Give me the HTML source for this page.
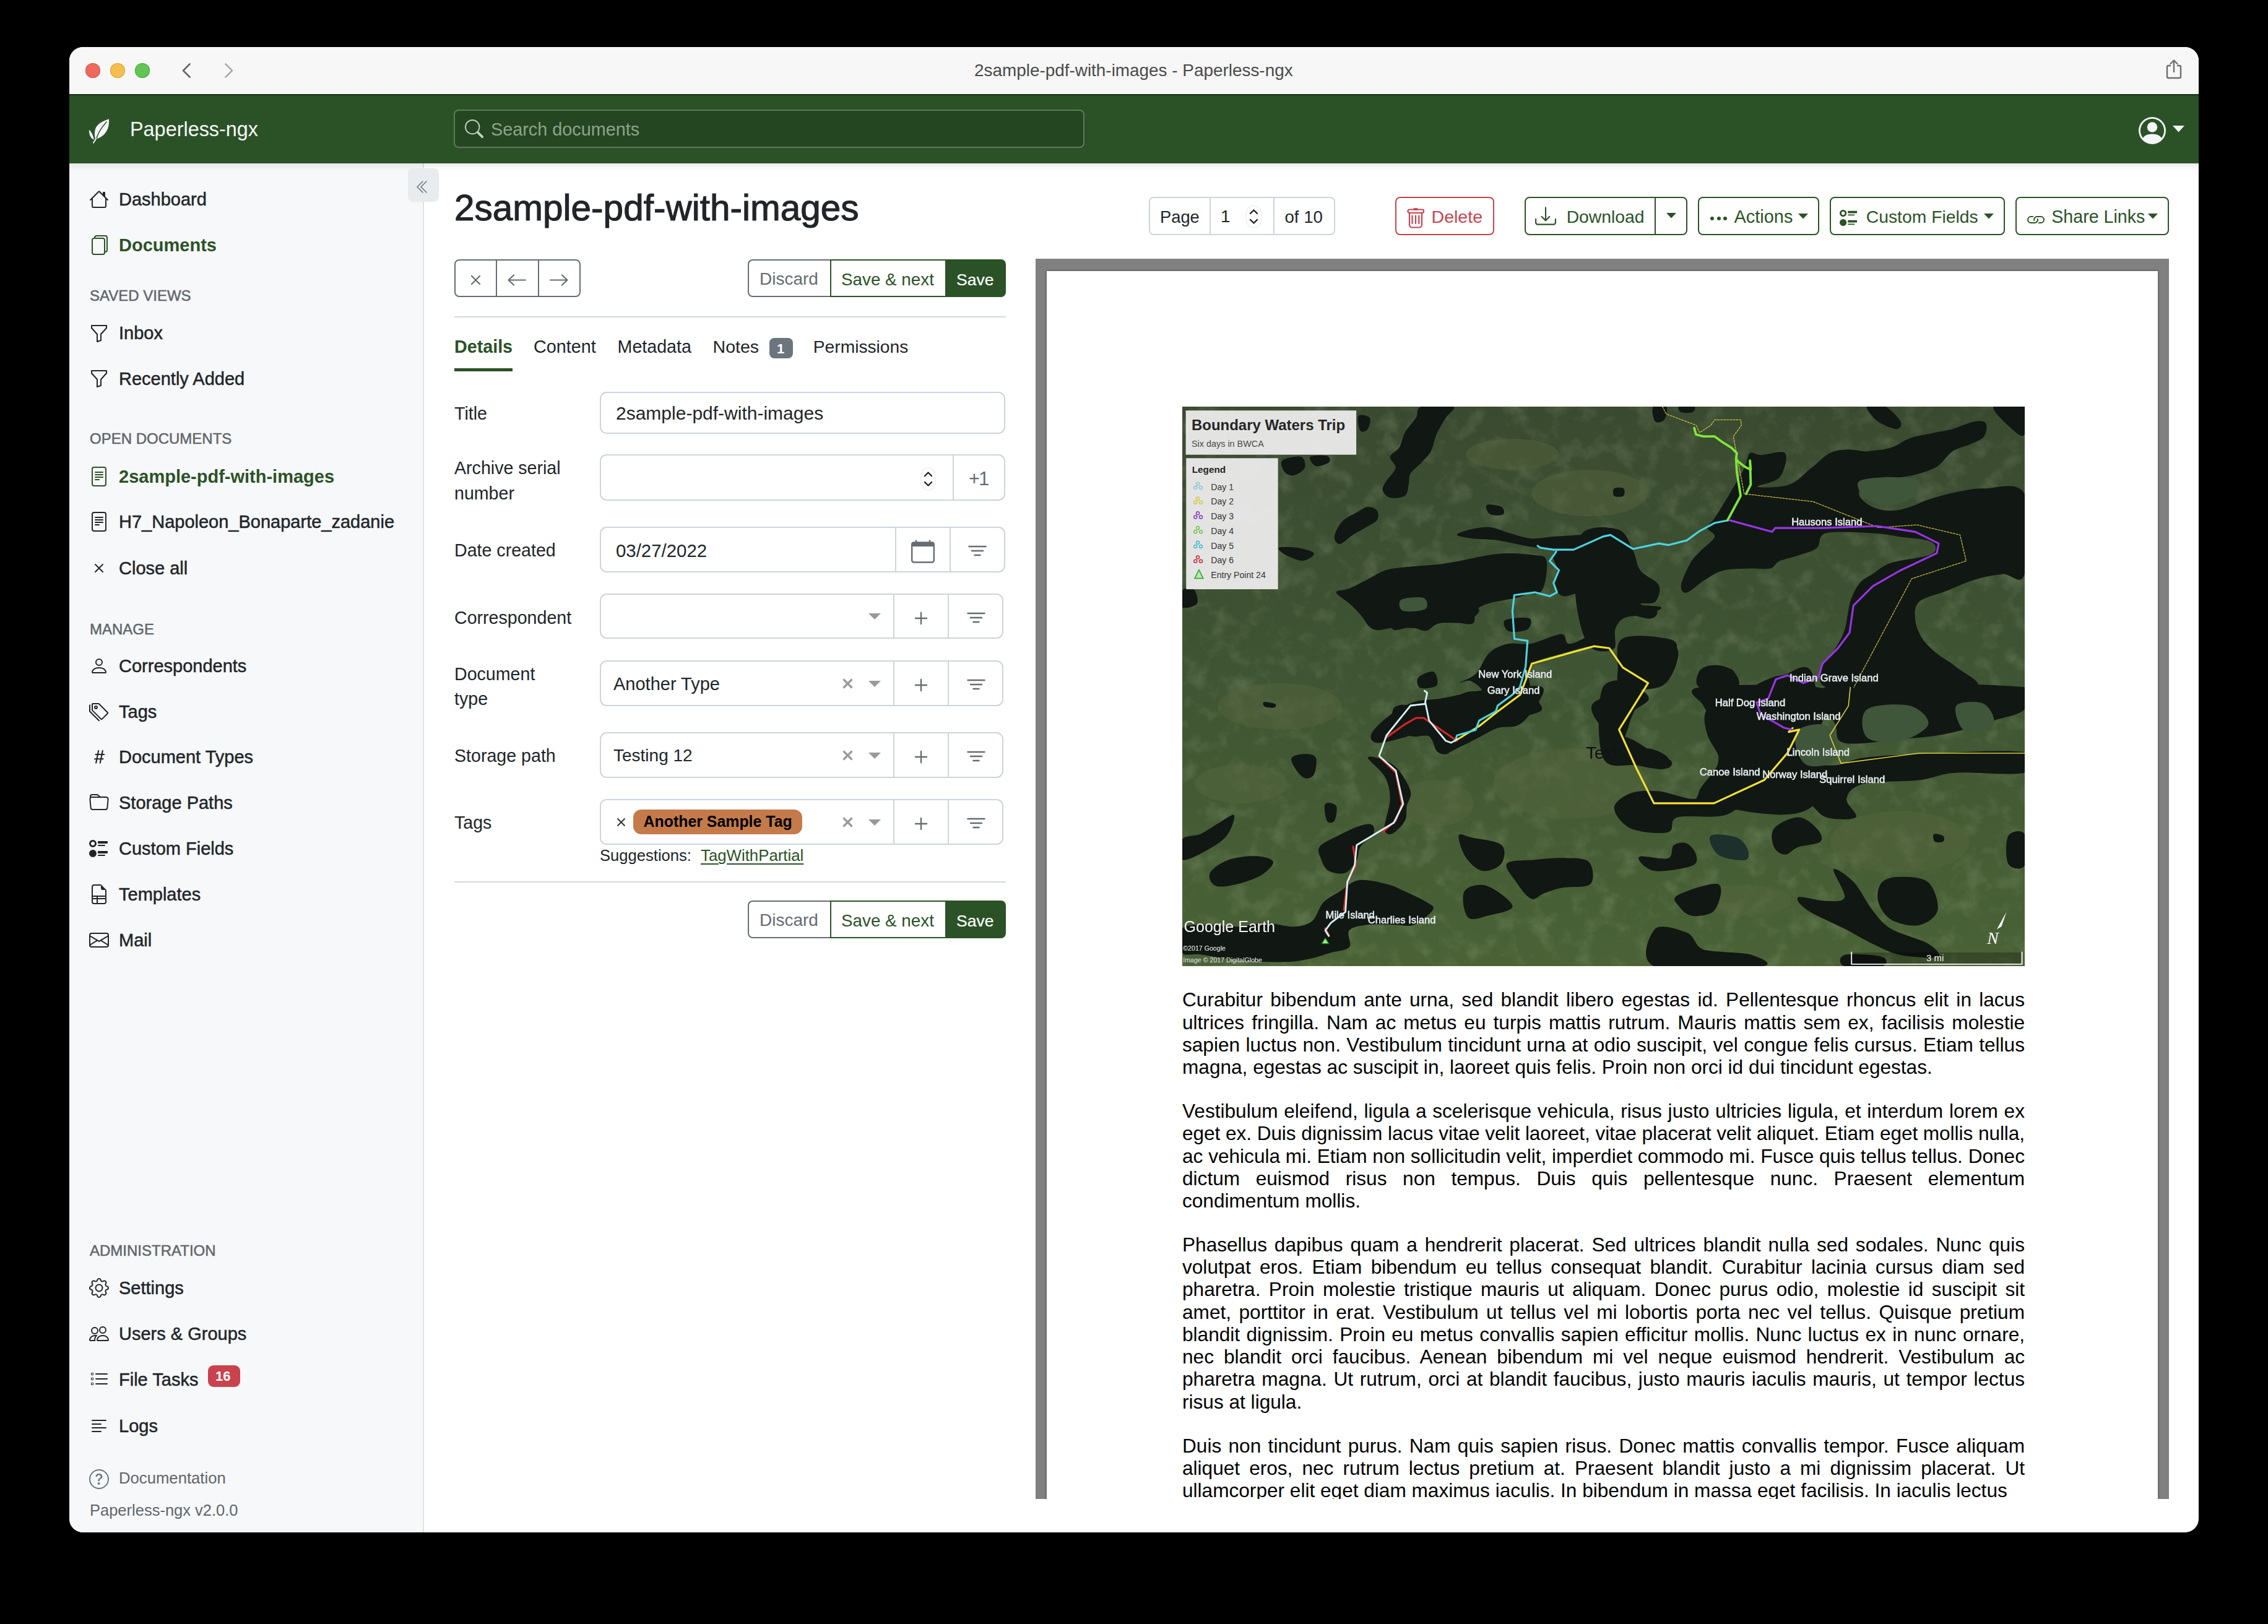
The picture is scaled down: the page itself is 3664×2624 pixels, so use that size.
<!DOCTYPE html>
<html><head><meta charset="utf-8"><title>Paperless-ngx</title>
<style>
html,body{margin:0;padding:0;width:3664px;height:2624px;overflow:hidden;background:#000}
#win{position:absolute;left:0;top:0;width:3664px;height:2624px;clip-path:inset(76px 112px 148px 112px round 22px)}
.t{position:absolute;white-space:nowrap;font-family:"Liberation Sans",sans-serif}
.r{position:absolute;box-sizing:border-box}
svg.r{overflow:visible}
</style></head><body><div id="win">
<div class="r" style="left:112px;top:76px;width:3440px;height:2400px;background:#fff"></div>
<div class="r" style="left:112px;top:76px;width:3440px;height:76px;background:#f7f7f7"></div>
<div class="r" style="left:138px;top:102px;width:24px;height:24px;border-radius:50%;background:#ee6a5f;box-shadow:inset 0 0 0 1px #d8574c"></div>
<div class="r" style="left:178px;top:102px;width:24px;height:24px;border-radius:50%;background:#f5bf4f;box-shadow:inset 0 0 0 1px #d9a23a"></div>
<div class="r" style="left:218px;top:102px;width:24px;height:24px;border-radius:50%;background:#61c554;box-shadow:inset 0 0 0 1px #4fa83f"></div>
<svg class="r" style="left:292px;top:101px;" width="18" height="26" viewBox="0 0 18 26"><path d="M14.5 2.5 L4 13 L14.5 23.5" fill="none" stroke="#636363" stroke-width="2.6" stroke-linecap="round" stroke-linejoin="round"/></svg>
<svg class="r" style="left:361px;top:101px;" width="18" height="26" viewBox="0 0 18 26"><path d="M3.5 2.5 L14 13 L3.5 23.5" fill="none" stroke="#ababab" stroke-width="2.6" stroke-linecap="round" stroke-linejoin="round"/></svg>
<div class="t " style="left:1574.0px;top:100.4px;font-size:27.9px;line-height:27.9px;color:#4a4a4a;font-weight:400;">2sample-pdf-with-images - Paperless-ngx</div>
<svg class="r" style="left:3498px;top:95px;" width="28" height="34" viewBox="0 0 28 34"><path d="M9 11 H5 a2 2 0 0 0 -2 2 V29 a2 2 0 0 0 2 2 H23 a2 2 0 0 0 2 -2 V13 a2 2 0 0 0 -2 -2 H19" fill="none" stroke="#6e6e6e" stroke-width="2.4"/><path d="M14 21 V3 M8.5 8 L14 2.5 L19.5 8" fill="none" stroke="#6e6e6e" stroke-width="2.4" stroke-linecap="round" stroke-linejoin="round"/></svg>
<div class="r" style="left:112px;top:152px;width:3440px;height:112px;background:#2b5227"></div>
<div class="r" style="left:112px;top:152px;width:3440px;height:2px;background:#143013"></div>
<svg class="r" style="left:143px;top:191px;" width="35" height="41" viewBox="0 0 35 41"><path d="M33,1.2 C33.8,12 31,22.5 21.4,29.3 C17,32.3 13.5,33.5 11.2,33.6 C9.2,28 9.6,20 12,15 C15.5,8.5 24,4.2 33,1.2 Z" fill="#f4f5f7"/><path d="M0.9,18.7 C4.5,22 7.5,27 8.9,34.8 C4.5,33 0.6,28 0.9,18.7 Z" fill="#f4f5f7"/><path d="M29.5,5.5 C22,13.5 15.5,23 12.2,34.5" fill="none" stroke="#2b5227" stroke-width="1.5"/><path d="M12.2,33 L8,39.8" fill="none" stroke="#f4f5f7" stroke-width="1.9" stroke-linecap="round"/></svg>
<div class="t " style="left:210.0px;top:192.9px;font-size:32.4px;line-height:32.4px;color:#f8f9fa;font-weight:400;">Paperless-ngx</div>
<div class="r" style="left:733px;top:177px;width:1019px;height:62px;box-sizing:border-box;border:2px solid rgba(255,255,255,0.28);border-radius:8px;background:rgba(0,0,0,0.14)"></div>
<svg class="r" style="left:751px;top:193px;" width="30" height="30" viewBox="0 0 16 16"><path d="M11.742 10.344a6.5 6.5 0 1 0-1.397 1.398h-.001c.03.04.062.078.098.115l3.85 3.85a1 1 0 0 0 1.415-1.414l-3.85-3.85a1.007 1.007 0 0 0-.115-.1zM12 6.5a5.5 5.5 0 1 1-11 0 5.5 5.5 0 0 1 11 0z" fill="#c4cfc2"/></svg>
<div class="t " style="left:793.0px;top:194.6px;font-size:28.8px;line-height:28.8px;color:#8ea489;font-weight:400;">Search documents</div>
<svg class="r" style="left:3455px;top:189px;" width="44" height="44" viewBox="0 0 16 16"><path d="M11 6a3 3 0 1 1-6 0 3 3 0 0 1 6 0z" fill="#f4f5f7"/><path fill-rule="evenodd" d="M0 8a8 8 0 1 1 16 0A8 8 0 0 1 0 8zm8-7a7 7 0 0 0-5.468 11.37C3.242 11.226 4.805 10 8 10s4.757 1.225 5.468 2.37A7 7 0 0 0 8 1z" fill="#f4f5f7"/></svg>
<svg class="r" style="left:3510px;top:203px;" width="19" height="11" viewBox="0 0 19 11"><path d="M0 0 H19 L9.5 10.5 Z" fill="#f4f5f7"/></svg>
<div class="r" style="left:112px;top:264px;width:572px;height:2212px;background:#f7f8fa"></div>
<div class="r" style="left:683px;top:264px;width:2px;height:2212px;background:#dfe2e6"></div>
<div class="r" style="left:112px;top:264px;width:3440px;height:12px;background:linear-gradient(rgba(0,0,0,0.07),rgba(0,0,0,0))"></div>
<div class="r" style="left:659px;top:272px;width:50px;height:54px;background:#e9ecef;border-radius:8px"></div>
<svg class="r" style="left:671px;top:290px;fill:#6c757d" width="24" height="24" viewBox="0 0 16 16"><path fill-rule="evenodd" d="M8.354 1.646a.5.5 0 0 1 0 .708L2.707 8l5.647 5.646a.5.5 0 0 1-.708.708l-6-6a.5.5 0 0 1 0-.708l6-6a.5.5 0 0 1 .708 0z"/><path fill-rule="evenodd" d="M12.354 1.646a.5.5 0 0 1 0 .708L6.707 8l5.647 5.646a.5.5 0 0 1-.708.708l-6-6a.5.5 0 0 1 0-.708l6-6a.5.5 0 0 1 .708 0z"/></svg>
<svg class="r" style="left:144px;top:306px;fill:#212529" width="32" height="32" viewBox="0 0 16 16"><path d="M8.707 1.5a1 1 0 0 0-1.414 0L.646 8.146a.5.5 0 0 0 .708.708L2 8.207V13.5A1.5 1.5 0 0 0 3.5 15h9a1.5 1.5 0 0 0 1.5-1.5V8.207l.646.647a.5.5 0 0 0 .708-.708L13 5.793V2.5a.5.5 0 0 0-.5-.5h-1a.5.5 0 0 0-.5.5v1.293L8.707 1.5ZM13 7.207V13.5a.5.5 0 0 1-.5.5h-9a.5.5 0 0 1-.5-.5V7.207l5-5 5 5Z"/></svg>
<div class="t " style="left:192.0px;top:307.5px;font-size:29px;line-height:29px;color:#212529;font-weight:400;-webkit-text-stroke:0.5px currentColor;">Dashboard</div>
<svg class="r" style="left:144px;top:380px;fill:#2b5227" width="32" height="32" viewBox="0 0 16 16"><path d="M13 0H6a2 2 0 0 0-2 2 2 2 0 0 0-2 2v10a2 2 0 0 0 2 2h7a2 2 0 0 0 2-2 2 2 0 0 0 2-2V2a2 2 0 0 0-2-2zm0 13V4a2 2 0 0 0-2-2H5a1 1 0 0 1 1-1h7a1 1 0 0 1 1 1v10a1 1 0 0 1-1 1zM3 4a1 1 0 0 1 1-1h7a1 1 0 0 1 1 1v10a1 1 0 0 1-1 1H4a1 1 0 0 1-1-1V4z"/></svg>
<div class="t " style="left:192.0px;top:381.5px;font-size:29px;line-height:29px;color:#2b5227;font-weight:700;">Documents</div>
<div class="t " style="left:145.0px;top:465.7px;font-size:24px;line-height:24px;color:#5f656b;font-weight:400;-webkit-text-stroke:0.5px currentColor;">SAVED VIEWS</div>
<svg class="r" style="left:144px;top:522.5px;fill:#212529" width="32" height="32" viewBox="0 0 16 16"><path d="M1.5 1.5A.5.5 0 0 1 2 1h12a.5.5 0 0 1 .5.5v2a.5.5 0 0 1-.128.334L10 8.692V13.5a.5.5 0 0 1-.342.474l-3 1A.5.5 0 0 1 6 14.5V8.692L1.628 3.834A.5.5 0 0 1 1.5 3.5v-2zm1 .5v1.308l4.372 4.858A.5.5 0 0 1 7 8.5v5.306l2-.666V8.5a.5.5 0 0 1 .128-.334L13.5 3.308V2h-11z"/></svg>
<div class="t " style="left:192.0px;top:524.0px;font-size:29px;line-height:29px;color:#212529;font-weight:400;-webkit-text-stroke:0.5px currentColor;">Inbox</div>
<svg class="r" style="left:144px;top:596px;fill:#212529" width="32" height="32" viewBox="0 0 16 16"><path d="M1.5 1.5A.5.5 0 0 1 2 1h12a.5.5 0 0 1 .5.5v2a.5.5 0 0 1-.128.334L10 8.692V13.5a.5.5 0 0 1-.342.474l-3 1A.5.5 0 0 1 6 14.5V8.692L1.628 3.834A.5.5 0 0 1 1.5 3.5v-2zm1 .5v1.308l4.372 4.858A.5.5 0 0 1 7 8.5v5.306l2-.666V8.5a.5.5 0 0 1 .128-.334L13.5 3.308V2h-11z"/></svg>
<div class="t " style="left:192.0px;top:597.5px;font-size:29px;line-height:29px;color:#212529;font-weight:400;-webkit-text-stroke:0.5px currentColor;">Recently Added</div>
<div class="t " style="left:145.0px;top:696.7px;font-size:24px;line-height:24px;color:#5f656b;font-weight:400;-webkit-text-stroke:0.5px currentColor;">OPEN DOCUMENTS</div>
<svg class="r" style="left:144px;top:754px;fill:#2b5227" width="32" height="32" viewBox="0 0 16 16"><path d="M5 4a.5.5 0 0 0 0 1h6a.5.5 0 0 0 0-1H5zm-.5 2.5A.5.5 0 0 1 5 6h6a.5.5 0 0 1 0 1H5a.5.5 0 0 1-.5-.5zM5 8a.5.5 0 0 0 0 1h6a.5.5 0 0 0 0-1H5zm0 2a.5.5 0 0 0 0 1h3a.5.5 0 0 0 0-1H5z"/><path d="M2 2a2 2 0 0 1 2-2h8a2 2 0 0 1 2 2v12a2 2 0 0 1-2 2H4a2 2 0 0 1-2-2V2zm10-1H4a1 1 0 0 0-1 1v12a1 1 0 0 0 1 1h8a1 1 0 0 0 1-1V2a1 1 0 0 0-1-1z"/></svg>
<div class="t " style="left:192.0px;top:755.5px;font-size:29px;line-height:29px;color:#2b5227;font-weight:700;">2sample-pdf-with-images</div>
<svg class="r" style="left:144px;top:827px;fill:#212529" width="32" height="32" viewBox="0 0 16 16"><path d="M5 4a.5.5 0 0 0 0 1h6a.5.5 0 0 0 0-1H5zm-.5 2.5A.5.5 0 0 1 5 6h6a.5.5 0 0 1 0 1H5a.5.5 0 0 1-.5-.5zM5 8a.5.5 0 0 0 0 1h6a.5.5 0 0 0 0-1H5zm0 2a.5.5 0 0 0 0 1h3a.5.5 0 0 0 0-1H5z"/><path d="M2 2a2 2 0 0 1 2-2h8a2 2 0 0 1 2 2v12a2 2 0 0 1-2 2H4a2 2 0 0 1-2-2V2zm10-1H4a1 1 0 0 0-1 1v12a1 1 0 0 0 1 1h8a1 1 0 0 0 1-1V2a1 1 0 0 0-1-1z"/></svg>
<div class="t " style="left:192.0px;top:828.5px;font-size:29px;line-height:29px;color:#212529;font-weight:400;-webkit-text-stroke:0.5px currentColor;">H7_Napoleon_Bonaparte_zadanie</div>
<svg class="r" style="left:144px;top:902px;fill:#212529" width="32" height="32" viewBox="0 0 16 16"><path d="M4.646 4.646a.5.5 0 0 1 .708 0L8 7.293l2.646-2.647a.5.5 0 0 1 .708.708L8.707 8l2.647 2.646a.5.5 0 0 1-.708.708L8 8.707l-2.646 2.647a.5.5 0 0 1-.708-.708L7.293 8 4.646 5.354a.5.5 0 0 1 0-.708z"/></svg>
<div class="t " style="left:192.0px;top:903.5px;font-size:29px;line-height:29px;color:#212529;font-weight:400;-webkit-text-stroke:0.5px currentColor;">Close all</div>
<div class="t " style="left:145.0px;top:1004.7px;font-size:24px;line-height:24px;color:#5f656b;font-weight:400;-webkit-text-stroke:0.5px currentColor;">MANAGE</div>
<svg class="r" style="left:144px;top:1060px;fill:#212529" width="32" height="32" viewBox="0 0 16 16"><path d="M8 8a3 3 0 1 0 0-6 3 3 0 0 0 0 6Zm2-3a2 2 0 1 1-4 0 2 2 0 0 1 4 0Zm4 8c0 1-1 1-1 1H3s-1 0-1-1 1-4 6-4 6 3 6 4Zm-1-.004c-.001-.246-.154-.986-.832-1.664C11.516 10.68 10.289 10 8 10c-2.29 0-3.516.68-4.168 1.332-.678.678-.83 1.418-.832 1.664h10Z"/></svg>
<div class="t " style="left:192.0px;top:1061.5px;font-size:29px;line-height:29px;color:#212529;font-weight:400;-webkit-text-stroke:0.5px currentColor;">Correspondents</div>
<svg class="r" style="left:144px;top:1134px;fill:#212529" width="32" height="32" viewBox="0 0 16 16"><path d="M3 2v4.586l7 7L14.586 9l-7-7H3zM2 2a1 1 0 0 1 1-1h4.586a1 1 0 0 1 .707.293l7 7a1 1 0 0 1 0 1.414l-4.586 4.586a1 1 0 0 1-1.414 0l-7-7A1 1 0 0 1 2 6.586V2z"/><path d="M5.5 5a.5.5 0 1 1 0-1 .5.5 0 0 1 0 1zm0 1a1.5 1.5 0 1 0 0-3 1.5 1.5 0 0 0 0 3zM1 7.086a1 1 0 0 0 .293.707L8.75 15.25l-.043.043a1 1 0 0 1-1.414 0l-7-7A1 1 0 0 1 0 7.586V3a1 1 0 0 1 1-1v5.086z"/></svg>
<div class="t " style="left:192.0px;top:1135.5px;font-size:29px;line-height:29px;color:#212529;font-weight:400;-webkit-text-stroke:0.5px currentColor;">Tags</div>
<svg class="r" style="left:144px;top:1207px;fill:#212529" width="32" height="32" viewBox="0 0 16 16"><path d="M8.39 12.648a1.32 1.32 0 0 0-.015.18c0 .305.21.508.5.508.266 0 .492-.172.555-.477l.554-2.703h1.204c.421 0 .617-.234.617-.547 0-.312-.188-.53-.617-.53h-.985l.516-2.524h1.265c.43 0 .618-.227.618-.547 0-.313-.188-.524-.618-.524h-1.046l.476-2.304a1.06 1.06 0 0 0 .016-.164.51.51 0 0 0-.516-.516.54.54 0 0 0-.539.43l-.523 2.554H7.617l.477-2.304c.008-.04.015-.118.015-.164a.512.512 0 0 0-.523-.516.539.539 0 0 0-.531.43L6.53 5.484H5.414c-.43 0-.617.22-.617.532 0 .312.187.539.617.539h.906l-.515 2.523H4.609c-.421 0-.609.219-.609.531 0 .313.188.547.61.547h.976l-.516 2.492c-.008.04-.015.125-.015.18 0 .305.21.508.5.508.265 0 .492-.172.554-.477l.555-2.703h2.242l-.515 2.492zm-1-6.109h2.266l-.515 2.563H6.859l.532-2.563z"/></svg>
<div class="t " style="left:192.0px;top:1208.5px;font-size:29px;line-height:29px;color:#212529;font-weight:400;-webkit-text-stroke:0.5px currentColor;">Document Types</div>
<svg class="r" style="left:144px;top:1281px;fill:#212529" width="32" height="32" viewBox="0 0 16 16"><path d="M.54 3.87.5 3a2 2 0 0 1 2-2h3.672a2 2 0 0 1 1.414.586l.828.828A2 2 0 0 0 9.828 3h3.982a2 2 0 0 1 1.992 2.181l-.637 7A2 2 0 0 1 13.174 14H2.826a2 2 0 0 1-1.991-1.819l-.637-7a1.99 1.99 0 0 1 .342-1.31zM2.19 4a1 1 0 0 0-.996 1.09l.637 7a1 1 0 0 0 .995.91h10.348a1 1 0 0 0 .995-.91l.637-7A1 1 0 0 0 13.81 4H2.19zm4.69-1.707A1 1 0 0 0 6.172 2H2.5a1 1 0 0 0-1 .981l.006.139C1.72 3.042 1.95 3 2.19 3h5.396l-.707-.707z"/></svg>
<div class="t " style="left:192.0px;top:1282.5px;font-size:29px;line-height:29px;color:#212529;font-weight:400;-webkit-text-stroke:0.5px currentColor;">Storage Paths</div>
<svg class="r" style="left:144px;top:1355px;fill:#212529" width="32" height="32" viewBox="0 0 16 16"><path d="M7 2.5a.5.5 0 0 1 .5-.5h7a.5.5 0 0 1 .5.5v1a.5.5 0 0 1-.5.5h-7a.5.5 0 0 1-.5-.5v-1zM0 12a3 3 0 1 1 6 0 3 3 0 0 1-6 0zm7-1.5a.5.5 0 0 1 .5-.5h7a.5.5 0 0 1 .5.5v1a.5.5 0 0 1-.5.5h-7a.5.5 0 0 1-.5-.5v-1zm0-5a.5.5 0 0 1 .5-.5h5a.5.5 0 0 1 0 1h-5a.5.5 0 0 1-.5-.5zm0 8a.5.5 0 0 1 .5-.5h5a.5.5 0 0 1 0 1h-5a.5.5 0 0 1-.5-.5zM3 1a3 3 0 1 0 0 6 3 3 0 0 0 0-6zm0 4.5a1.5 1.5 0 1 1 0-3 1.5 1.5 0 0 1 0 3z"/></svg>
<div class="t " style="left:192.0px;top:1356.5px;font-size:29px;line-height:29px;color:#212529;font-weight:400;-webkit-text-stroke:0.5px currentColor;">Custom Fields</div>
<svg class="r" style="left:144px;top:1429px;fill:#212529" width="32" height="32" viewBox="0 0 16 16"><path d="M14 4.5V14a2 2 0 0 1-2 2H4a2 2 0 0 1-2-2V2a2 2 0 0 1 2-2h5.5L14 4.5ZM13 4.5h-2A1.5 1.5 0 0 1 9.5 3V1H4a1 1 0 0 0-1 1v7h10V4.5ZM3 10v1h3v-1H3Zm0 2v2a1 1 0 0 0 1 1h2v-3H3Zm4 3h5a1 1 0 0 0 1-1v-2H7v3Zm6-4v-1H7v1h6Z"/></svg>
<div class="t " style="left:192.0px;top:1430.5px;font-size:29px;line-height:29px;color:#212529;font-weight:400;-webkit-text-stroke:0.5px currentColor;">Templates</div>
<svg class="r" style="left:144px;top:1503px;fill:#212529" width="32" height="32" viewBox="0 0 16 16"><path d="M0 4a2 2 0 0 1 2-2h12a2 2 0 0 1 2 2v8a2 2 0 0 1-2 2H2a2 2 0 0 1-2-2V4Zm2-1a1 1 0 0 0-1 1v.217l7 4.2 7-4.2V4a1 1 0 0 0-1-1H2Zm13 2.383-4.708 2.825L15 11.105V5.383Zm-.034 6.876-5.64-3.471L8 9.583l-1.326-.795-5.64 3.47A1 1 0 0 0 2 13h12a1 1 0 0 0 .966-.741ZM1 11.105l4.708-2.897L1 5.383v5.722Z"/></svg>
<div class="t " style="left:192.0px;top:1504.5px;font-size:29px;line-height:29px;color:#212529;font-weight:400;-webkit-text-stroke:0.5px currentColor;">Mail</div>
<div class="t " style="left:145.0px;top:2008.7px;font-size:24px;line-height:24px;color:#5f656b;font-weight:400;-webkit-text-stroke:0.5px currentColor;">ADMINISTRATION</div>
<svg class="r" style="left:144px;top:2065px;fill:#212529" width="32" height="32" viewBox="0 0 16 16"><path d="M8 4.754a3.246 3.246 0 1 0 0 6.492 3.246 3.246 0 0 0 0-6.492zM5.754 8a2.246 2.246 0 1 1 4.492 0 2.246 2.246 0 0 1-4.492 0z"/><path d="M9.796 1.343c-.527-1.79-3.065-1.79-3.592 0l-.094.319a.873.873 0 0 1-1.255.52l-.292-.16c-1.64-.892-3.433.902-2.54 2.541l.159.292a.873.873 0 0 1-.52 1.255l-.319.094c-1.79.527-1.79 3.065 0 3.592l.319.094a.873.873 0 0 1 .52 1.255l-.16.292c-.892 1.64.901 3.434 2.541 2.54l.292-.159a.873.873 0 0 1 1.255.52l.094.319c.527 1.79 3.065 1.79 3.592 0l.094-.319a.873.873 0 0 1 1.255-.52l.292.16c1.64.893 3.434-.902 2.54-2.541l-.159-.292a.873.873 0 0 1 .52-1.255l.319-.094c1.79-.527 1.79-3.065 0-3.592l-.319-.094a.873.873 0 0 1-.52-1.255l.16-.292c.893-1.64-.902-3.433-2.541-2.54l-.292.159a.873.873 0 0 1-1.255-.52l-.094-.319zm-2.633.283c.246-.835 1.428-.835 1.674 0l.094.319a1.873 1.873 0 0 0 2.693 1.115l.291-.16c.764-.415 1.6.42 1.184 1.185l-.159.292a1.873 1.873 0 0 0 1.116 2.692l.318.094c.835.246.835 1.428 0 1.674l-.319.094a1.873 1.873 0 0 0-1.115 2.693l.16.291c.415.764-.42 1.6-1.185 1.184l-.291-.159a1.873 1.873 0 0 0-2.693 1.116l-.094.318c-.246.835-1.428.835-1.674 0l-.094-.319a1.873 1.873 0 0 0-2.692-1.115l-.292.16c-.764.415-1.6-.42-1.184-1.185l.159-.291A1.873 1.873 0 0 0 1.945 8.93l-.319-.094c-.835-.246-.835-1.428 0-1.674l.319-.094A1.873 1.873 0 0 0 3.06 4.377l-.16-.292c-.415-.764.42-1.6 1.185-1.184l.292.159a1.873 1.873 0 0 0 2.692-1.115l.094-.319z"/></svg>
<div class="t " style="left:192.0px;top:2066.5px;font-size:29px;line-height:29px;color:#212529;font-weight:400;-webkit-text-stroke:0.5px currentColor;">Settings</div>
<svg class="r" style="left:144px;top:2139px;fill:#212529" width="32" height="32" viewBox="0 0 16 16"><path d="M15 14s1 0 1-1-1-4-5-4-5 3-5 4 1 1 1 1h8Zm-7.978-1A.261.261 0 0 1 7 12.996c.001-.264.167-1.03.76-1.72C8.312 10.629 9.282 10 11 10c1.717 0 2.687.63 3.24 1.276.593.69.758 1.457.76 1.72l-.008.002a.274.274 0 0 1-.014.002H7.022ZM11 7a2 2 0 1 0 0-4 2 2 0 0 0 0 4Zm3-2a3 3 0 1 1-6 0 3 3 0 0 1 6 0ZM6.936 9.28a5.88 5.88 0 0 0-1.23-.247A7.35 7.35 0 0 0 5 9c-4 0-5 3-5 4 0 .667.333 1 1 1h4.216A2.238 2.238 0 0 1 5 13c0-1.01.377-2.042 1.09-2.904.243-.294.526-.569.846-.816ZM4.92 10A5.493 5.493 0 0 0 4 13H1c0-.26.164-1.03.76-1.724.545-.636 1.492-1.256 3.16-1.275ZM1.5 5.5a3 3 0 1 1 6 0 3 3 0 0 1-6 0Zm3-2a2 2 0 1 0 0 4 2 2 0 0 0 0-4Z"/></svg>
<div class="t " style="left:192.0px;top:2140.5px;font-size:29px;line-height:29px;color:#212529;font-weight:400;-webkit-text-stroke:0.5px currentColor;">Users &amp; Groups</div>
<svg class="r" style="left:144px;top:2213px;fill:#212529" width="32" height="32" viewBox="0 0 16 16"><path fill-rule="evenodd" d="M2 2.5a.5.5 0 0 0-.5.5v1a.5.5 0 0 0 .5.5h1a.5.5 0 0 0 .5-.5V3a.5.5 0 0 0-.5-.5H2zM3 3H2v1h1V3z"/><path d="M5 3.5a.5.5 0 0 1 .5-.5h9a.5.5 0 0 1 0 1h-9a.5.5 0 0 1-.5-.5zM5.5 7a.5.5 0 0 0 0 1h9a.5.5 0 0 0 0-1h-9zm0 4a.5.5 0 0 0 0 1h9a.5.5 0 0 0 0-1h-9z"/><path fill-rule="evenodd" d="M1.5 7a.5.5 0 0 1 .5-.5h1a.5.5 0 0 1 .5.5v1a.5.5 0 0 1-.5.5H2a.5.5 0 0 1-.5-.5V7zM2 7h1v1H2V7zm0 3.5a.5.5 0 0 0-.5.5v1a.5.5 0 0 0 .5.5h1a.5.5 0 0 0 .5-.5v-1a.5.5 0 0 0-.5-.5H2zm1 .5H2v1h1v-1z"/></svg>
<div class="t " style="left:192.0px;top:2214.5px;font-size:29px;line-height:29px;color:#212529;font-weight:400;-webkit-text-stroke:0.5px currentColor;">File Tasks</div>
<div class="r" style="left:336px;top:2206px;width:52px;height:35px;background:#c8434e;border-radius:9px"></div>
<div class="t " style="left:348.0px;top:2213.4px;font-size:22px;line-height:22px;color:#fff;font-weight:700;">16</div>
<svg class="r" style="left:144px;top:2288px;fill:#212529" width="32" height="32" viewBox="0 0 16 16"><path d="M2 12.5a.5.5 0 0 1 .5-.5h7a.5.5 0 0 1 0 1h-7a.5.5 0 0 1-.5-.5zm0-3a.5.5 0 0 1 .5-.5h11a.5.5 0 0 1 0 1h-11a.5.5 0 0 1-.5-.5zm0-3a.5.5 0 0 1 .5-.5h7a.5.5 0 0 1 0 1h-7a.5.5 0 0 1-.5-.5zm0-3a.5.5 0 0 1 .5-.5h11a.5.5 0 0 1 0 1h-11a.5.5 0 0 1-.5-.5z"/></svg>
<div class="t " style="left:192.0px;top:2289.5px;font-size:29px;line-height:29px;color:#212529;font-weight:400;-webkit-text-stroke:0.5px currentColor;">Logs</div>
<svg class="r" style="left:144px;top:2374px;fill:#6c757d" width="32" height="32" viewBox="0 0 16 16"><path d="M8 15A7 7 0 1 1 8 1a7 7 0 0 1 0 14zm0 1A8 8 0 1 0 8 0a8 8 0 0 0 0 16z"/><path d="M5.255 5.786a.237.237 0 0 0 .241.247h.825c.138 0 .248-.113.266-.25.09-.656.54-1.134 1.342-1.134.686 0 1.314.343 1.314 1.168 0 .635-.374.927-.965 1.371-.673.489-1.206 1.06-1.168 1.987l.003.217a.25.25 0 0 0 .25.246h.811a.25.25 0 0 0 .25-.25v-.105c0-.718.273-.927 1.01-1.486.609-.463 1.244-.977 1.244-2.056 0-1.511-1.276-2.241-2.673-2.241-1.267 0-2.655.59-2.75 2.286zm1.557 5.763c0 .533.425.927 1.01.927.609 0 1.028-.394 1.028-.927 0-.552-.42-.94-1.029-.94-.584 0-1.009.388-1.009.94z"/></svg>
<div class="t " style="left:192.0px;top:2376.2px;font-size:25.7px;line-height:25.7px;color:#5f656b;font-weight:400;">Documentation</div>
<div class="t " style="left:145.0px;top:2428.4px;font-size:25.5px;line-height:25.5px;color:#5f656b;font-weight:400;">Paperless-ngx v2.0.0</div>
<div class="t " style="left:734.0px;top:307.0px;font-size:58.5px;line-height:58.5px;color:#212529;font-weight:400;-webkit-text-stroke:1.1px currentColor;">2sample-pdf-with-images</div>
<div class="r" style="left:734px;top:419px;width:204px;height:61px;border:2px solid #656c73;border-radius:8px"></div>
<div class="r" style="left:801px;top:419px;width:2px;height:61px;background:#656c73"></div>
<div class="r" style="left:869px;top:419px;width:2px;height:61px;background:#656c73"></div>
<svg class="r" style="left:761px;top:445px;" width="15" height="15" viewBox="0 0 15 15"><path d="M1 1 L14 14 M14 1 L1 14" stroke="#656c73" stroke-width="2.2" stroke-linecap="round"/></svg>
<svg class="r" style="left:819px;top:443px;" width="32" height="20" viewBox="0 0 32 20"><path d="M30 9.5 H2.5 M11 1.5 L2.5 9.5 L11 17.5" fill="none" stroke="#656c73" stroke-width="2.2" stroke-linecap="round" stroke-linejoin="round"/></svg>
<svg class="r" style="left:887px;top:443px;" width="32" height="20" viewBox="0 0 32 20"><path d="M2 9.5 H29.5 M21 1.5 L29.5 9.5 L21 17.5" fill="none" stroke="#656c73" stroke-width="2.2" stroke-linecap="round" stroke-linejoin="round"/></svg>
<div class="r" style="left:1208px;top:419px;width:135px;height:61px;border:2px solid #656c73;border-right:none;border-radius:8px 0 0 8px"></div>
<div class="r" style="left:1341px;top:419px;width:188px;height:61px;border:2px solid #2b5227"></div>
<div class="r" style="left:1528px;top:419px;width:97px;height:61px;background:#2b5227;border-radius:0 8px 8px 0"></div>
<div class="t " style="left:1227.0px;top:437.3px;font-size:28px;line-height:28px;color:#656c73;font-weight:400;">Discard</div>
<div class="t " style="left:1359.0px;top:437.5px;font-size:27.8px;line-height:27.8px;color:#2b5227;font-weight:400;">Save &amp; next</div>
<div class="t " style="left:1545.0px;top:438.6px;font-size:26.5px;line-height:26.5px;color:#fff;font-weight:400;-webkit-text-stroke:0.2px #fff;">Save</div>
<div class="r" style="left:734px;top:511px;width:891px;height:2px;background:#d3d9df"></div>
<div class="t " style="left:734.0px;top:545.7px;font-size:28.7px;line-height:28.7px;color:#2b5227;font-weight:700;">Details</div>
<div class="t " style="left:862.0px;top:545.6px;font-size:28.8px;line-height:28.8px;color:#212529;font-weight:400;">Content</div>
<div class="t " style="left:997.6px;top:545.8px;font-size:28.6px;line-height:28.6px;color:#212529;font-weight:400;">Metadata</div>
<div class="t " style="left:1151.6px;top:545.9px;font-size:28.5px;line-height:28.5px;color:#212529;font-weight:400;">Notes</div>
<div class="r" style="left:1243px;top:546px;width:38px;height:33px;background:#6c757d;border-radius:8px"></div>
<div class="t " style="left:1255.0px;top:553.4px;font-size:22px;line-height:22px;color:#fff;font-weight:700;">1</div>
<div class="t " style="left:1313.8px;top:546.1px;font-size:28.2px;line-height:28.2px;color:#212529;font-weight:400;">Permissions</div>
<div class="r" style="left:734px;top:595px;width:94px;height:5px;background:#2b5227"></div>
<div class="t " style="left:734.0px;top:653.8px;font-size:28.6px;line-height:28.6px;color:#212529;font-weight:400;">Title</div>
<div class="r" style="left:969px;top:633px;width:655px;height:68px;border:2px solid #ced4da;border-radius:11px"></div>
<div class="t " style="left:995.0px;top:652.6px;font-size:30px;line-height:30px;color:#212529;font-weight:400;">2sample-pdf-with-images</div>
<div class="t " style="left:734.0px;top:741.8px;font-size:28.6px;line-height:28.6px;color:#212529;font-weight:400;">Archive serial</div>
<div class="t " style="left:734.0px;top:783.3px;font-size:28.6px;line-height:28.6px;color:#212529;font-weight:400;">number</div>
<div class="r" style="left:969px;top:734px;width:655px;height:75px;border:2px solid #ced4da;border-radius:11px"></div>
<div class="r" style="left:1539px;top:734px;width:2px;height:75px;background:#ced4da"></div>
<div class="r" style="left:1488px;top:757px;width:23px;height:34px;border-radius:11px;box-shadow:0 0 2px rgba(0,0,0,0.25);background:#fff"></div>
<svg class="r" style="left:1492px;top:761px;" width="15" height="26" viewBox="0 0 15 26"><path d="M2 8 L7.5 2.5 L13 8 M2 18 L7.5 23.5 L13 18" fill="none" stroke="#222" stroke-width="2.4" stroke-linecap="round" stroke-linejoin="round"/></svg>
<div class="t " style="left:1565.0px;top:757.6px;font-size:30.5px;line-height:30.5px;color:#656c73;font-weight:400;letter-spacing:-1.5px;">+1</div>
<div class="t " style="left:734.0px;top:874.8px;font-size:28.6px;line-height:28.6px;color:#212529;font-weight:400;">Date created</div>
<div class="r" style="left:969px;top:851px;width:655px;height:74px;border:2px solid #ced4da;border-radius:11px"></div>
<div class="r" style="left:1446px;top:851px;width:2px;height:74px;background:#ced4da"></div>
<div class="r" style="left:1534px;top:851px;width:2px;height:74px;background:#ced4da"></div>
<div class="t " style="left:995.0px;top:874.5px;font-size:29.4px;line-height:29.4px;color:#212529;font-weight:400;">03/27/2022</div>
<svg class="r" style="left:1472px;top:872px;" width="38" height="38" viewBox="0 0 38 38"><rect x="1.2" y="4.5" width="35.6" height="32" rx="3" fill="none" stroke="#656c73" stroke-width="2.4"/><rect x="1.2" y="4.5" width="35.6" height="6.5" rx="2" fill="#656c73"/><path d="M8 0.5 V5 M30 0.5 V5" stroke="#656c73" stroke-width="2.4"/></svg>
<svg class="r" style="left:1564px;top:881px;" width="30" height="18" viewBox="0 0 30 18"><path d="M1.5 2 H28.5 M6 9 H24 M10.5 16 H19.5" stroke="#656c73" stroke-width="2.4" stroke-linecap="round"/></svg>
<div class="r" style="left:969px;top:959px;width:652px;height:73px;border:2px solid #ced4da;border-radius:11px"></div>
<div class="r" style="left:1443px;top:959px;width:2px;height:73px;background:#ced4da"></div>
<div class="r" style="left:1531px;top:959px;width:2px;height:73px;background:#ced4da"></div>
<svg class="r" style="left:1403px;top:991.0px;" width="20" height="10" viewBox="0 0 20 10"><path d="M0 0 H20 L10 10 Z" fill="#999999"/></svg>
<svg class="r" style="left:1477.5px;top:988.5px;" width="20" height="20" viewBox="0 0 20 20"><path d="M10 1 V19 M1 10 H19" stroke="#656c73" stroke-width="2.4" stroke-linecap="round"/></svg>
<svg class="r" style="left:1562px;top:988.5px;" width="30" height="18" viewBox="0 0 30 18"><path d="M1.5 2 H28.5 M6 9 H24 M10.5 16 H19.5" stroke="#656c73" stroke-width="2.4" stroke-linecap="round"/></svg>
<div class="t " style="left:734.0px;top:983.8px;font-size:28.6px;line-height:28.6px;color:#212529;font-weight:400;">Correspondent</div>
<div class="r" style="left:969px;top:1067px;width:652px;height:74px;border:2px solid #ced4da;border-radius:11px"></div>
<div class="r" style="left:1443px;top:1067px;width:2px;height:74px;background:#ced4da"></div>
<div class="r" style="left:1531px;top:1067px;width:2px;height:74px;background:#ced4da"></div>
<svg class="r" style="left:1403px;top:1099.5px;" width="20" height="10" viewBox="0 0 20 10"><path d="M0 0 H20 L10 10 Z" fill="#999999"/></svg>
<svg class="r" style="left:1361px;top:1095.5px;" width="17" height="17" viewBox="0 0 17 17"><path d="M1.5 1.5 L15.5 15.5 M15.5 1.5 L1.5 15.5" stroke="#999999" stroke-width="3.2" stroke-linecap="butt"/></svg>
<svg class="r" style="left:1477.5px;top:1097.0px;" width="20" height="20" viewBox="0 0 20 20"><path d="M10 1 V19 M1 10 H19" stroke="#656c73" stroke-width="2.4" stroke-linecap="round"/></svg>
<svg class="r" style="left:1562px;top:1097.0px;" width="30" height="18" viewBox="0 0 30 18"><path d="M1.5 2 H28.5 M6 9 H24 M10.5 16 H19.5" stroke="#656c73" stroke-width="2.4" stroke-linecap="round"/></svg>
<div class="t " style="left:734.0px;top:1074.8px;font-size:28.6px;line-height:28.6px;color:#212529;font-weight:400;">Document</div>
<div class="t " style="left:734.0px;top:1114.8px;font-size:28.6px;line-height:28.6px;color:#212529;font-weight:400;">type</div>
<div class="t " style="left:991.0px;top:1090.5px;font-size:29px;line-height:29px;color:#212529;font-weight:400;">Another Type</div>
<div class="r" style="left:969px;top:1183px;width:652px;height:74px;border:2px solid #ced4da;border-radius:11px"></div>
<div class="r" style="left:1443px;top:1183px;width:2px;height:74px;background:#ced4da"></div>
<div class="r" style="left:1531px;top:1183px;width:2px;height:74px;background:#ced4da"></div>
<svg class="r" style="left:1403px;top:1215.5px;" width="20" height="10" viewBox="0 0 20 10"><path d="M0 0 H20 L10 10 Z" fill="#999999"/></svg>
<svg class="r" style="left:1361px;top:1211.5px;" width="17" height="17" viewBox="0 0 17 17"><path d="M1.5 1.5 L15.5 15.5 M15.5 1.5 L1.5 15.5" stroke="#999999" stroke-width="3.2" stroke-linecap="butt"/></svg>
<svg class="r" style="left:1477.5px;top:1213.0px;" width="20" height="20" viewBox="0 0 20 20"><path d="M10 1 V19 M1 10 H19" stroke="#656c73" stroke-width="2.4" stroke-linecap="round"/></svg>
<svg class="r" style="left:1562px;top:1213.0px;" width="30" height="18" viewBox="0 0 30 18"><path d="M1.5 2 H28.5 M6 9 H24 M10.5 16 H19.5" stroke="#656c73" stroke-width="2.4" stroke-linecap="round"/></svg>
<div class="t " style="left:734.0px;top:1206.8px;font-size:28.6px;line-height:28.6px;color:#212529;font-weight:400;">Storage path</div>
<div class="t " style="left:991.0px;top:1207.3px;font-size:28px;line-height:28px;color:#212529;font-weight:400;">Testing 12</div>
<div class="r" style="left:969px;top:1291px;width:652px;height:74px;border:2px solid #ced4da;border-radius:11px"></div>
<div class="r" style="left:1443px;top:1291px;width:2px;height:74px;background:#ced4da"></div>
<div class="r" style="left:1531px;top:1291px;width:2px;height:74px;background:#ced4da"></div>
<svg class="r" style="left:1403px;top:1323.5px;" width="20" height="10" viewBox="0 0 20 10"><path d="M0 0 H20 L10 10 Z" fill="#999999"/></svg>
<svg class="r" style="left:1361px;top:1319.5px;" width="17" height="17" viewBox="0 0 17 17"><path d="M1.5 1.5 L15.5 15.5 M15.5 1.5 L1.5 15.5" stroke="#999999" stroke-width="3.2" stroke-linecap="butt"/></svg>
<svg class="r" style="left:1477.5px;top:1321.0px;" width="20" height="20" viewBox="0 0 20 20"><path d="M10 1 V19 M1 10 H19" stroke="#656c73" stroke-width="2.4" stroke-linecap="round"/></svg>
<svg class="r" style="left:1562px;top:1321.0px;" width="30" height="18" viewBox="0 0 30 18"><path d="M1.5 2 H28.5 M6 9 H24 M10.5 16 H19.5" stroke="#656c73" stroke-width="2.4" stroke-linecap="round"/></svg>
<div class="t " style="left:734.0px;top:1314.8px;font-size:28.6px;line-height:28.6px;color:#212529;font-weight:400;">Tags</div>
<svg class="r" style="left:996px;top:1321px;" width="15" height="15" viewBox="0 0 15 15"><path d="M1.5 1.5 L13.5 13.5 M13.5 1.5 L1.5 13.5" stroke="#333" stroke-width="2"/></svg>
<div class="r" style="left:1023px;top:1308px;width:273px;height:40px;background:#c47a4a;border-radius:13px"></div>
<div class="t " style="left:1039.5px;top:1314.9px;font-size:24.9px;line-height:24.9px;color:#000;font-weight:700;">Another Sample Tag</div>
<div class="t " style="left:969.0px;top:1370.3px;font-size:25.6px;line-height:25.6px;color:#212529;font-weight:400;">Suggestions:</div>
<div class="t " style="left:1132.0px;top:1370.2px;font-size:25.8px;line-height:25.8px;color:#2b5227;font-weight:400;text-decoration:underline;text-underline-offset:4px;text-decoration-thickness:2px;">TagWithPartial</div>
<div class="r" style="left:734px;top:1424px;width:891px;height:2px;background:#d3d9df"></div>
<div class="r" style="left:1208px;top:1455px;width:135px;height:61px;border:2px solid #656c73;border-right:none;border-radius:8px 0 0 8px"></div>
<div class="r" style="left:1341px;top:1455px;width:188px;height:61px;border:2px solid #2b5227"></div>
<div class="r" style="left:1528px;top:1455px;width:97px;height:61px;background:#2b5227;border-radius:0 8px 8px 0"></div>
<div class="t " style="left:1227.0px;top:1473.3px;font-size:28px;line-height:28px;color:#656c73;font-weight:400;">Discard</div>
<div class="t " style="left:1359.0px;top:1473.5px;font-size:27.8px;line-height:27.8px;color:#2b5227;font-weight:400;">Save &amp; next</div>
<div class="t " style="left:1545.0px;top:1474.6px;font-size:26.5px;line-height:26.5px;color:#fff;font-weight:400;-webkit-text-stroke:0.2px #fff;">Save</div>
<div class="r" style="left:1856px;top:318px;width:301px;height:62px;border:2px solid #ced4da;border-radius:8px"></div>
<div class="r" style="left:1954px;top:318px;width:2px;height:62px;background:#ced4da"></div>
<div class="r" style="left:2057px;top:318px;width:2px;height:62px;background:#ced4da"></div>
<div class="t " style="left:1874.0px;top:336.9px;font-size:27.3px;line-height:27.3px;color:#212529;font-weight:400;">Page</div>
<div class="t " style="left:1972.0px;top:336.3px;font-size:28px;line-height:28px;color:#212529;font-weight:400;">1</div>
<div class="r" style="left:2014px;top:333px;width:23px;height:34px;border-radius:11px;box-shadow:0 0 2px rgba(0,0,0,0.25);background:#fff"></div>
<svg class="r" style="left:2018px;top:337px;" width="15" height="26" viewBox="0 0 15 26"><path d="M2 8 L7.5 2.5 L13 8 M2 18 L7.5 23.5 L13 18" fill="none" stroke="#222" stroke-width="2.4" stroke-linecap="round" stroke-linejoin="round"/></svg>
<div class="t " style="left:2075.5px;top:336.6px;font-size:27.6px;line-height:27.6px;color:#212529;font-weight:400;">of 10</div>
<div class="r" style="left:2254px;top:318px;width:160px;height:62px;border:2px solid #c8434e;border-radius:8px"></div>
<svg class="r" style="left:2270px;top:333px;" width="34" height="38" viewBox="0 0 34 38"><rect x="4.5" y="5.5" width="25.5" height="5.5" rx="2.5" fill="none" stroke="#c8434e" stroke-width="2.2"/><rect x="13" y="3.2" width="8" height="3.5" rx="1.7" fill="#c8434e"/><path d="M7 11 V30 a4.5 4.5 0 0 0 4.5 4.5 H22.5 a4.5 4.5 0 0 0 4.5 -4.5 V11" fill="none" stroke="#c8434e" stroke-width="2.2"/><path d="M11.5 15.5 V28 M17 15.5 V28 M22.3 15.5 V28" stroke="#c8434e" stroke-width="2.2" stroke-linecap="round"/></svg>
<div class="t " style="left:2312.6px;top:335.9px;font-size:28.5px;line-height:28.5px;color:#c8434e;font-weight:400;">Delete</div>
<div class="r" style="left:2463px;top:318px;width:263px;height:62px;border:2px solid #2b5227;border-radius:8px"></div>
<div class="r" style="left:2673px;top:318px;width:2px;height:62px;background:#2b5227"></div>
<svg class="r" style="left:2479px;top:332px;fill:#2b5227" width="36" height="34" viewBox="0 0 16 16"><path d="M.5 9.9a.5.5 0 0 1 .5.5v2.5a1 1 0 0 0 1 1h12a1 1 0 0 0 1-1v-2.5a.5.5 0 0 1 1 0v2.5a2 2 0 0 1-2 2H2a2 2 0 0 1-2-2v-2.5a.5.5 0 0 1 .5-.5z"/><path d="M7.646 11.854a.5.5 0 0 0 .708 0l3-3a.5.5 0 0 0-.708-.708L8.5 10.293V1.5a.5.5 0 0 0-1 0v8.793L5.354 8.146a.5.5 0 1 0-.708.708l3 3z"/></svg>
<div class="t " style="left:2530.7px;top:336.0px;font-size:28.3px;line-height:28.3px;color:#2b5227;font-weight:400;">Download</div>
<svg class="r" style="left:2692px;top:344px;" width="16" height="9" viewBox="0 0 16 9"><path d="M0 0 H16 L8 8.5 Z" fill="#2b5227"/></svg>
<div class="r" style="left:2743px;top:318px;width:196px;height:62px;border:2px solid #2b5227;border-radius:8px"></div>
<div class="r" style="left:2763px;top:350px;width:6px;height:6px;border-radius:50%;background:#2b5227"></div>
<div class="r" style="left:2773.5px;top:350px;width:6px;height:6px;border-radius:50%;background:#2b5227"></div>
<div class="r" style="left:2784px;top:350px;width:6px;height:6px;border-radius:50%;background:#2b5227"></div>
<div class="t " style="left:2801.6px;top:335.5px;font-size:28.9px;line-height:28.9px;color:#2b5227;font-weight:400;">Actions</div>
<svg class="r" style="left:2905px;top:345px;" width="16" height="9" viewBox="0 0 16 9"><path d="M0 0 H16 L8 8.5 Z" fill="#2b5227"/></svg>
<div class="r" style="left:2956px;top:318px;width:283px;height:62px;border:2px solid #2b5227;border-radius:8px"></div>
<svg class="r" style="left:2971px;top:337px;fill:#2b5227" width="32" height="30" viewBox="0 0 16 16"><path d="M7 2.5a.5.5 0 0 1 .5-.5h7a.5.5 0 0 1 .5.5v1a.5.5 0 0 1-.5.5h-7a.5.5 0 0 1-.5-.5v-1zM0 12a3 3 0 1 1 6 0 3 3 0 0 1-6 0zm7-1.5a.5.5 0 0 1 .5-.5h7a.5.5 0 0 1 .5.5v1a.5.5 0 0 1-.5.5h-7a.5.5 0 0 1-.5-.5v-1zm0-5a.5.5 0 0 1 .5-.5h5a.5.5 0 0 1 0 1h-5a.5.5 0 0 1-.5-.5zm0 8a.5.5 0 0 1 .5-.5h5a.5.5 0 0 1 0 1h-5a.5.5 0 0 1-.5-.5zM3 1a3 3 0 1 0 0 6 3 3 0 0 0 0-6zm0 4.5a1.5 1.5 0 1 1 0-3 1.5 1.5 0 0 1 0 3z"/></svg>
<div class="t " style="left:3014.8px;top:336.0px;font-size:28.3px;line-height:28.3px;color:#2b5227;font-weight:400;">Custom Fields</div>
<svg class="r" style="left:3205px;top:345px;" width="16" height="9" viewBox="0 0 16 9"><path d="M0 0 H16 L8 8.5 Z" fill="#2b5227"/></svg>
<div class="r" style="left:3256px;top:318px;width:248px;height:62px;border:2px solid #2b5227;border-radius:8px"></div>
<svg class="r" style="left:3273px;top:338px;fill:#2b5227" width="32" height="32" viewBox="0 0 16 16"><path d="M6.354 5.5H4a3 3 0 0 0 0 6h3a3 3 0 0 0 2.83-4H9c-.086 0-.17.01-.25.031A2 2 0 0 1 7 10.5H4a2 2 0 1 1 0-4h1.535c.218-.376.495-.714.82-1z"/><path d="M9 5.5a3 3 0 0 0-2.83 4h1.098A2 2 0 0 1 9 6.5h3a2 2 0 1 1 0 4h-1.535a4.02 4.02 0 0 1-.82 1H12a3 3 0 1 0 0-6H9z"/></svg>
<div class="t " style="left:3314.3px;top:335.8px;font-size:28.6px;line-height:28.6px;color:#2b5227;font-weight:400;">Share Links</div>
<svg class="r" style="left:3470px;top:345px;" width="16" height="9" viewBox="0 0 16 9"><path d="M0 0 H16 L8 8.5 Z" fill="#2b5227"/></svg>
<div class="r" style="left:1673px;top:418px;width:1831px;height:2004px;overflow:hidden;background:#808080"><div class="r" style="left:18px;top:20px;width:1795px;height:2100px;background:#fff;box-shadow:0 0 3px 1px rgba(0,0,0,0.28)"></div></div>
<svg class="r" style="left:1910px;top:657px;overflow:hidden" width="1361" height="904" viewBox="48 27 2174 1443" preserveAspectRatio="none"><defs><linearGradient id="mg" x1="0" y1="0" x2="0" y2="1"><stop offset="0" stop-color="#3a4a30"/><stop offset="0.5" stop-color="#3f5533"/><stop offset="1" stop-color="#4a6236"/></linearGradient><filter id="sh" x="-5%" y="-20%" width="110%" height="140%"><feDropShadow dx="0" dy="0" stdDeviation="1.2" flood-color="#000" flood-opacity="0.9"/></filter></defs><rect x="48" y="27" width="2174" height="1443" fill="url(#mg)"/><filter id="tx" x="0" y="0" width="100%" height="100%"><feTurbulence type="fractalNoise" baseFrequency="0.018" numOctaves="4" seed="7"/><feColorMatrix type="matrix" values="0 0 0 0 0.55  0 0 0 0 0.6  0 0 0 0 0.4  1.6 0 0 0 -0.78"/></filter><rect x="48" y="27" width="2174" height="1443" filter="url(#tx)" opacity="0.28"/><ellipse cx="300" cy="800" rx="160" ry="60" fill="#56663f" opacity="0.45"/><ellipse cx="200" cy="1000" rx="120" ry="50" fill="#56663f" opacity="0.45"/><ellipse cx="1050" cy="1000" rx="200" ry="90" fill="#56663f" opacity="0.45"/><ellipse cx="1900" cy="1150" rx="180" ry="80" fill="#56663f" opacity="0.45"/><ellipse cx="1100" cy="250" rx="150" ry="60" fill="#56663f" opacity="0.45"/><ellipse cx="900" cy="150" rx="120" ry="40" fill="#56663f" opacity="0.45"/><ellipse cx="1500" cy="1300" rx="120" ry="40" fill="#56663f" opacity="0.45"/><ellipse cx="700" cy="1050" rx="100" ry="60" fill="#56663f" opacity="0.45"/><path d="M665.6,27.1 C681.6,22.4 736.7,22.4 747.0,27.1 C757.4,31.9 735.1,43.9 727.9,55.9 C720.7,67.9 710.3,84.6 703.9,99.0 C697.6,113.3 696.0,130.1 689.6,142.1 C683.2,154.0 674.4,161.2 665.6,170.8 C656.9,180.4 642.5,190.0 636.9,199.5 C631.3,209.1 634.5,218.7 632.1,228.3 C629.7,237.8 630.5,251.4 622.5,257.0 C614.6,262.6 593.8,264.2 584.2,261.8 C574.7,259.4 566.7,249.8 565.1,242.6 C563.5,235.5 569.1,228.3 574.7,218.7 C580.2,209.1 597.0,195.5 598.6,185.2 C600.2,174.8 582.6,165.2 584.2,156.4 C585.8,147.7 601.8,142.9 608.2,132.5 C614.6,122.1 615.4,107.0 622.5,94.2 C629.7,81.4 644.1,67.1 651.3,55.9 C658.5,44.7 649.7,31.9 665.6,27.1Z" fill="#111713"/><path d="M502.8,51.1 C506.8,45.5 527.6,50.3 531.6,55.9 C535.5,61.5 530.8,79.0 526.8,84.6 C522.8,90.2 511.6,95.0 507.6,89.4 C503.6,83.8 498.8,56.7 502.8,51.1Z" fill="#111713"/><path d="M306.5,166.0 C313.7,159.6 344.8,153.2 354.4,156.4 C364.0,159.6 367.2,177.2 364.0,185.2 C360.8,193.2 344.0,202.7 335.2,204.3 C326.4,205.9 316.1,201.1 311.3,194.8 C306.5,188.4 299.3,172.4 306.5,166.0Z" fill="#111713"/><path d="M378.3,156.4 C383.1,152.1 413.4,151.7 421.4,154.0 C429.4,156.4 431.0,166.4 426.2,170.8 C421.4,175.2 400.7,182.8 392.7,180.4 C384.7,178.0 373.5,160.8 378.3,156.4Z" fill="#111713"/><path d="M440.6,362.4 C441.4,352.8 450.2,334.4 459.7,324.0 C469.3,313.7 486.9,306.5 498.0,300.1 C509.2,293.7 518.0,286.5 526.8,285.7 C535.5,284.9 546.7,289.7 550.7,295.3 C554.7,300.9 555.5,312.1 550.7,319.3 C545.9,326.4 532.4,332.0 522.0,338.4 C511.6,344.8 499.6,350.4 488.5,357.6 C477.3,364.7 462.9,380.7 454.9,381.5 C447.0,382.3 439.8,371.9 440.6,362.4Z" fill="#111713"/><path d="M296.9,391.1 C301.7,387.9 329.6,388.7 344.8,391.1 C360.0,393.5 385.5,399.9 387.9,405.4 C390.3,411.0 371.1,423.8 359.2,424.6 C347.2,425.4 326.4,415.8 316.1,410.2 C305.7,404.7 292.1,394.3 296.9,391.1Z" fill="#111713"/><path d="M756.6,357.6 C756.6,353.6 780.6,346.4 794.9,343.2 C809.3,340.0 826.9,336.8 842.8,338.4 C858.8,340.0 873.1,348.0 890.7,352.8 C908.3,357.6 929.0,365.5 948.2,367.1 C967.3,368.7 984.1,363.9 1005.6,362.4 C1027.2,360.8 1056.1,359.2 1077.5,357.6 C1098.8,356.0 1124.5,347.2 1134.0,352.8 C1143.4,358.4 1141.0,383.9 1134.0,391.1 C1126.9,398.3 1113.2,395.1 1091.8,395.9 C1070.4,396.7 1032.0,397.5 1005.6,395.9 C979.3,394.3 957.7,390.3 933.8,386.3 C909.9,382.3 885.1,375.1 862.0,371.9 C838.8,368.7 812.5,369.5 794.9,367.1 C777.4,364.7 756.6,361.6 756.6,357.6Z" fill="#111713"/><path d="M445.4,506.0 C445.4,499.6 465.3,502.0 478.9,496.4 C492.5,490.8 510.8,480.5 526.8,472.5 C542.7,464.5 554.7,454.1 574.7,448.5 C594.6,443.0 624.1,441.4 646.5,439.0 C668.8,436.6 688.8,436.6 708.7,434.2 C728.7,431.8 744.7,428.6 766.2,424.6 C787.7,420.6 817.3,413.4 838.0,410.2 C858.8,407.0 870.8,405.4 890.7,405.4 C910.7,405.4 941.8,407.8 957.7,410.2 C973.7,412.6 981.7,410.2 986.5,419.8 C991.3,429.4 988.9,453.3 986.5,467.7 C984.1,482.1 980.1,498.8 972.1,506.0 C964.1,513.2 949.0,508.4 938.6,510.8 C928.2,513.2 926.6,516.4 909.9,520.4 C893.1,524.4 855.6,529.2 838.0,534.7 C820.5,540.3 811.7,545.1 804.5,553.9 C797.3,562.7 809.3,583.4 794.9,587.4 C780.6,591.4 739.1,576.2 718.3,577.8 C697.6,579.4 690.4,593.8 670.4,597.0 C650.5,600.2 620.1,596.2 598.6,597.0 C577.1,597.8 556.3,607.4 541.1,601.8 C526.0,596.2 518.0,574.6 507.6,563.5 C497.2,552.3 489.3,544.3 478.9,534.7 C468.5,525.2 445.4,512.4 445.4,506.0Z" fill="#111713"/><path d="M1005.6,405.4 C1012.0,396.7 1032.1,399.9 1053.5,395.9 C1074.9,391.9 1120.6,363.1 1134.0,381.5 C1147.4,399.9 1143.4,485.3 1134.0,506.0 C1124.5,526.8 1094.9,504.4 1077.5,506.0 C1060.1,507.6 1041.5,518.8 1029.6,515.6 C1017.6,512.4 1008.0,498.0 1005.6,486.9 C1003.2,475.7 1015.2,462.1 1015.2,448.5 C1015.2,435.0 999.2,414.2 1005.6,405.4Z" fill="#111713"/><path d="M881.1,577.8 C889.9,572.3 933.8,569.1 943.4,573.1 C953.0,577.0 947.4,596.2 938.6,601.8 C929.8,607.4 900.3,610.6 890.7,606.6 C881.1,602.6 872.3,583.4 881.1,577.8Z" fill="#111713"/><path d="M833.2,280.9 C838.0,277.8 864.4,281.7 871.6,285.7 C878.7,289.7 881.1,301.7 876.3,304.9 C871.6,308.1 850.0,308.9 842.8,304.9 C835.6,300.9 828.5,284.1 833.2,280.9Z" fill="#111713"/><path d="M47.9,501.2 C52.7,493.2 70.3,490.8 76.6,496.4 C83.0,502.0 91.0,526.8 86.2,534.7 C81.4,542.7 54.3,549.9 47.9,544.3 C41.5,538.7 43.1,509.2 47.9,501.2Z" fill="#111713"/><path d="M1263.4,27.1 C1268.2,20.8 1292.1,21.6 1296.9,27.1 C1301.7,32.7 1296.9,54.3 1292.1,60.7 C1287.3,67.1 1272.9,71.1 1268.2,65.5 C1263.4,59.9 1258.6,33.5 1263.4,27.1Z" fill="#111713"/><path d="M1330.5,27.1 C1336.1,24.8 1363.3,24.8 1368.9,27.1 C1374.5,29.5 1369.7,39.1 1364.1,41.5 C1358.5,43.9 1340.9,43.9 1335.3,41.5 C1329.7,39.1 1324.9,29.5 1330.5,27.1Z" fill="#111713"/><path d="M1162.6,238.2 C1166.6,235.0 1182.6,235.0 1186.6,238.2 C1190.6,241.4 1190.6,254.2 1186.6,257.3 C1182.6,260.5 1166.6,260.5 1162.6,257.3 C1158.6,254.2 1158.6,241.4 1162.6,238.2Z" fill="#111713"/><path d="M1460.0,252.6 C1472.8,231.0 1489.6,203.0 1498.4,185.4 C1507.1,167.8 1505.5,152.6 1512.7,147.0 C1519.9,141.4 1526.3,151.8 1541.5,151.8 C1556.7,151.8 1595.9,137.5 1603.9,147.0 C1611.9,156.6 1601.5,195.0 1589.5,209.4 C1577.5,223.8 1527.9,230.2 1531.9,233.4 C1535.9,236.6 1590.3,236.6 1613.4,228.6 C1636.6,220.6 1653.4,199.0 1671.0,185.4 C1688.6,171.8 1703.0,155.0 1719.0,147.0 C1734.9,139.1 1750.9,138.3 1766.9,137.5 C1782.9,136.7 1796.5,143.0 1814.9,142.2 C1833.3,141.4 1858.8,138.3 1877.2,132.7 C1895.6,127.1 1906.8,115.1 1925.2,108.7 C1943.6,102.3 1969.1,98.3 1987.5,94.3 C2005.9,90.3 2017.9,89.5 2035.5,84.7 C2053.1,79.9 2078.6,67.9 2093.0,65.5 C2107.4,63.1 2117.8,63.9 2121.8,70.3 C2125.8,76.7 2123.4,95.1 2117.0,103.9 C2110.6,112.7 2097.0,116.7 2083.4,123.1 C2069.8,129.5 2049.9,132.7 2035.5,142.2 C2021.1,151.8 2011.5,171.0 1997.1,180.6 C1982.7,190.2 1965.1,195.0 1949.2,199.8 C1933.2,204.6 1917.2,207.8 1901.2,209.4 C1885.2,211.0 1869.2,206.2 1853.2,209.4 C1837.3,212.6 1814.9,220.6 1805.3,228.6 C1795.7,236.6 1791.7,247.8 1795.7,257.3 C1799.7,266.9 1815.7,279.7 1829.3,286.1 C1842.8,292.5 1861.2,295.7 1877.2,295.7 C1893.2,295.7 1909.2,290.9 1925.2,286.1 C1941.2,281.3 1953.2,273.3 1973.1,266.9 C1993.1,260.5 2021.1,252.6 2045.1,247.8 C2069.1,243.0 2087.6,237.4 2117.0,238.2 C2146.4,239.0 2204.1,215.8 2221.6,252.6 C2239.0,289.3 2231.0,424.4 2221.6,458.8 C2212.1,493.1 2186.4,456.4 2165.0,458.8 C2143.5,461.2 2117.0,466.0 2093.0,473.2 C2069.1,480.4 2045.1,492.3 2021.1,501.9 C1997.1,511.5 1962.7,517.9 1949.2,530.7 C1935.6,543.5 1938.0,562.7 1939.6,578.7 C1941.2,594.7 1949.2,612.2 1958.7,626.6 C1968.3,641.0 1982.7,653.0 1997.1,665.0 C2011.5,677.0 2029.1,684.3 2045.1,698.6 C2061.1,712.9 2125.0,742.1 2093.0,750.8 C2061.1,759.5 1917.2,750.8 1853.2,750.8 C1789.3,750.8 1734.9,759.5 1709.4,750.8 C1683.8,742.1 1695.8,715.3 1699.8,698.6 C1703.8,681.9 1723.8,666.6 1733.3,650.6 C1742.9,634.6 1750.9,622.6 1757.3,602.6 C1763.7,582.7 1765.3,550.7 1771.7,530.7 C1778.1,510.7 1786.1,494.7 1795.7,482.7 C1805.3,470.8 1815.7,467.6 1829.3,458.8 C1842.8,450.0 1853.2,438.0 1877.2,430.0 C1901.2,422.0 1954.0,417.2 1973.1,410.8 C1992.3,404.4 1992.3,398.0 1992.3,391.6 C1992.3,385.2 1988.3,377.2 1973.1,372.4 C1957.9,367.7 1925.2,366.1 1901.2,362.9 C1877.2,359.7 1861.2,354.9 1829.3,353.3 C1797.3,351.7 1733.3,346.9 1709.4,353.3 C1685.4,359.7 1697.4,382.0 1685.4,391.6 C1673.4,401.2 1653.4,405.2 1637.4,410.8 C1621.4,416.4 1601.5,419.6 1589.5,425.2 C1577.5,430.8 1577.5,441.2 1565.5,444.4 C1553.5,447.6 1537.5,443.6 1517.5,444.4 C1497.6,445.2 1465.6,444.4 1445.6,449.2 C1425.6,454.0 1413.6,463.6 1397.6,473.2 C1381.7,482.7 1360.1,504.3 1349.7,506.7 C1339.3,509.1 1333.7,500.3 1335.3,487.5 C1336.9,474.8 1351.3,444.4 1359.3,430.0 C1367.3,415.6 1372.9,412.4 1383.3,401.2 C1393.6,390.0 1418.4,373.2 1421.6,362.9 C1424.8,352.5 1402.4,346.9 1402.4,338.9 C1402.4,330.9 1412.0,329.3 1421.6,314.9 C1431.2,300.5 1447.2,274.1 1460.0,252.6Z" fill="#111713"/><path d="M1076.3,358.1 C1094.7,330.9 1149.9,337.3 1172.2,343.7 C1194.6,350.1 1201.0,378.8 1210.6,396.4 C1220.2,414.0 1218.6,434.0 1229.8,449.2 C1241.0,464.4 1271.3,474.0 1277.7,487.5 C1284.1,501.1 1276.1,522.7 1268.2,530.7 C1260.2,538.7 1229.0,531.5 1229.8,535.5 C1230.6,539.5 1269.0,548.3 1272.9,554.7 C1276.9,561.1 1269.0,573.1 1253.8,573.9 C1238.6,574.7 1197.8,557.9 1181.8,559.5 C1165.8,561.1 1161.0,568.3 1157.8,583.5 C1154.7,598.6 1173.0,641.0 1162.6,650.6 C1152.3,660.2 1112.3,665.0 1095.5,641.0 C1078.7,617.0 1065.1,553.9 1061.9,506.7 C1058.7,459.6 1057.9,385.2 1076.3,358.1Z" fill="#111713"/><path d="M1181.8,626.6 C1199.4,613.8 1253.8,617.8 1277.7,621.8 C1301.7,625.8 1319.3,636.2 1325.7,650.6 C1332.1,665.0 1324.1,691.4 1316.1,708.2 C1308.1,724.9 1300.1,743.7 1277.7,750.8 C1255.4,757.9 1199.4,759.5 1181.8,750.8 C1164.2,742.1 1172.2,719.3 1172.2,698.6 C1172.2,677.9 1164.2,639.4 1181.8,626.6Z" fill="#111713"/><path d="M1383.3,708.2 C1389.6,698.6 1407.2,693.8 1421.6,693.8 C1436.0,693.8 1460.0,698.6 1469.6,708.2 C1479.2,717.7 1493.6,743.7 1479.2,750.8 C1464.8,757.9 1399.2,757.9 1383.3,750.8 C1367.3,743.7 1376.9,717.7 1383.3,708.2Z" fill="#111713"/><path d="M1814.9,27.1 C1818.1,20.8 1848.4,20.8 1862.8,27.1 C1877.2,33.5 1896.4,55.9 1901.2,65.5 C1906.0,75.1 1901.2,84.7 1891.6,84.7 C1882.0,84.7 1856.4,75.1 1843.6,65.5 C1830.9,55.9 1811.7,33.5 1814.9,27.1Z" fill="#111713"/><path d="M2141.0,27.1 C2146.4,17.6 2208.1,15.2 2221.6,27.1 C2235.0,39.1 2227.0,89.5 2221.6,99.1 C2216.1,108.7 2202.4,96.7 2188.9,84.7 C2175.5,72.7 2135.6,36.7 2141.0,27.1Z" fill="#111713"/><path d="M763.3,739.3 C765.7,736.1 793.6,728.1 806.4,715.4 C819.1,702.6 826.3,675.5 839.9,662.7 C853.5,649.9 870.2,642.7 887.8,638.8 C905.3,634.8 926.1,641.9 945.2,638.8 C964.4,635.6 988.3,623.6 1002.7,619.6 C1017.1,615.6 1024.3,611.6 1031.4,614.8 C1038.6,618.0 1035.4,638.0 1045.8,638.8 C1056.2,639.6 1075.3,629.2 1093.7,619.6 C1112.0,610.0 1144.0,594.1 1155.9,581.3 C1167.9,568.5 1144.8,549.4 1165.5,543.0 C1186.3,536.6 1266.1,539.8 1280.4,543.0 C1294.8,546.2 1266.9,557.3 1251.7,562.1 C1236.6,566.9 1203.8,565.3 1189.5,571.7 C1175.1,578.1 1170.3,588.5 1165.5,600.4 C1160.7,612.4 1170.3,636.4 1160.7,643.5 C1151.2,650.7 1129.6,640.3 1108.1,643.5 C1086.5,646.7 1057.8,654.7 1031.4,662.7 C1005.1,670.7 964.4,677.9 950.0,691.4 C935.7,705.0 942.9,728.9 945.2,744.1 C947.6,759.3 959.6,771.2 964.4,782.4 C969.2,793.6 982.0,803.2 974.0,811.1 C966.0,819.1 929.3,823.9 916.5,830.3 C903.7,836.7 903.7,846.3 897.4,849.5 C891.0,852.6 884.6,853.4 878.2,849.5 C871.8,845.5 870.2,827.1 859.1,825.5 C847.9,823.9 822.3,831.1 811.2,839.9 C800.0,848.7 801.6,870.2 792.0,878.2 C782.4,886.2 763.3,880.6 753.7,887.8 C744.1,894.9 742.5,916.5 734.5,921.3 C726.6,926.1 713.8,923.7 705.8,916.5 C697.8,909.3 696.2,884.6 686.7,878.2 C677.1,871.8 659.5,879.0 648.4,878.2 C637.2,877.4 629.2,875.0 619.6,873.4 C610.0,871.8 595.7,879.0 590.9,868.6 C586.1,858.2 587.7,823.1 590.9,811.1 C594.1,799.2 602.1,799.2 610.0,796.8 C618.0,794.4 627.6,798.4 638.8,796.8 C649.9,795.2 661.1,789.6 677.1,787.2 C693.0,784.8 717.0,786.4 734.5,782.4 C752.1,778.4 768.1,767.2 782.4,763.3 C796.8,759.3 819.1,763.3 820.7,758.5 C822.3,753.7 801.6,737.7 792.0,734.5 C782.4,731.3 760.9,742.5 763.3,739.3Z" fill="#111713"/><path d="M657.9,724.9 C664.3,718.6 688.3,707.4 696.2,710.6 C704.2,713.8 709.0,736.9 705.8,744.1 C702.6,751.3 685.1,752.9 677.1,753.7 C669.1,754.5 661.1,753.7 657.9,748.9 C654.7,744.1 651.5,731.3 657.9,724.9Z" fill="#111713"/><path d="M1108.1,792.0 C1116.8,781.6 1145.6,773.6 1165.5,768.0 C1185.5,762.5 1213.4,756.1 1227.8,758.5 C1242.1,760.9 1254.1,773.6 1251.7,782.4 C1249.3,791.2 1223.8,801.6 1213.4,811.1 C1203.0,820.7 1195.9,830.3 1189.5,839.9 C1183.1,849.5 1171.1,860.6 1175.1,868.6 C1179.1,876.6 1199.0,879.8 1213.4,887.8 C1227.8,895.7 1245.3,907.7 1261.3,916.5 C1277.3,925.3 1302.8,933.3 1309.2,940.4 C1315.6,947.6 1309.2,957.2 1299.6,959.6 C1290.0,962.0 1266.1,958.8 1251.7,954.8 C1237.4,950.8 1223.8,942.0 1213.4,935.6 C1203.0,929.3 1199.0,926.1 1189.5,916.5 C1179.9,906.9 1168.7,892.5 1155.9,878.2 C1143.2,863.8 1120.8,844.7 1112.8,830.3 C1104.9,815.9 1099.3,802.4 1108.1,792.0Z" fill="#111713"/><path d="M1179.9,701.0 C1185.5,689.8 1205.4,677.9 1213.4,667.5 C1221.4,657.1 1215.8,645.9 1227.8,638.8 C1239.7,631.6 1269.3,624.4 1285.2,624.4 C1301.2,624.4 1319.6,628.4 1323.5,638.8 C1327.5,649.1 1321.2,670.7 1309.2,686.6 C1297.2,702.6 1269.3,724.9 1251.7,734.5 C1234.2,744.1 1215.8,744.1 1203.8,744.1 C1191.9,744.1 1183.9,741.7 1179.9,734.5 C1175.9,727.3 1174.3,712.2 1179.9,701.0Z" fill="#111713"/><path d="M1381.0,715.4 C1382.6,701.0 1402.6,698.6 1414.5,696.2 C1426.5,693.8 1442.5,693.0 1452.8,701.0 C1463.2,709.0 1467.2,735.3 1476.8,744.1 C1486.4,752.9 1498.3,755.3 1510.3,753.7 C1522.3,752.1 1534.2,740.1 1548.6,734.5 C1563.0,728.9 1575.1,721.8 1596.5,720.2 C1617.9,718.6 1663.5,669.3 1676.9,724.9 C1690.4,780.6 1722.3,999.1 1676.9,1053.9 C1631.6,1108.8 1454.3,1059.3 1405.0,1053.9 C1355.6,1048.6 1379.4,1035.2 1381.0,1021.8 C1382.6,1008.5 1405.8,988.3 1414.5,974.0 C1423.3,959.6 1435.3,951.6 1433.7,935.6 C1432.1,919.7 1411.3,895.7 1405.0,878.2 C1398.6,860.6 1395.4,846.3 1395.4,830.3 C1395.4,814.3 1407.3,801.6 1405.0,782.4 C1402.6,763.3 1379.4,729.7 1381.0,715.4Z" fill="#111713"/><path d="M590.9,543.0 C626.0,533.4 769.7,536.6 801.6,543.0 C833.5,549.4 797.6,574.1 782.4,581.3 C767.3,588.5 728.2,582.1 710.6,586.1 C693.0,590.1 689.1,603.6 677.1,605.2 C665.1,606.8 653.1,596.5 638.8,595.7 C624.4,594.9 598.9,609.2 590.9,600.4 C582.9,591.7 555.8,552.6 590.9,543.0Z" fill="#111713"/><path d="M536.3,870.3 C541.9,858.3 565.9,836.0 584.2,822.4 C602.6,808.9 624.1,796.1 646.5,788.9 C668.8,781.7 690.4,784.1 718.3,779.3 C746.2,774.5 782.2,765.0 814.1,760.2 C846.0,755.4 882.7,752.2 909.9,750.6 C937.0,749.0 967.3,744.2 976.9,750.6 C986.5,757.0 976.9,772.9 967.3,788.9 C957.7,804.9 937.0,835.2 919.4,846.4 C901.9,857.5 879.5,850.4 862.0,855.9 C844.4,861.5 830.0,871.9 814.1,879.9 C798.1,887.9 782.2,896.6 766.2,903.8 C750.2,911.0 730.3,925.4 718.3,923.0 C706.3,920.6 702.4,899.8 694.4,889.5 C686.4,879.1 682.4,862.3 670.4,860.7 C658.5,859.1 642.5,874.3 622.5,879.9 C602.6,885.5 565.1,895.8 550.7,894.2 C536.3,892.7 530.8,882.3 536.3,870.3Z" fill="#111713"/><path d="M330.4,932.6 C334.4,926.2 353.6,923.0 364.0,923.0 C374.3,923.0 388.7,923.8 392.7,932.6 C396.7,941.3 392.7,966.9 387.9,975.7 C383.1,984.4 371.9,987.6 364.0,985.2 C356.0,982.8 345.6,970.1 340.0,961.3 C334.4,952.5 326.4,938.9 330.4,932.6Z" fill="#111713"/><path d="M526.8,932.6 C526.0,925.4 552.3,932.6 565.1,937.3 C577.8,942.1 591.4,947.7 603.4,961.3 C615.4,974.9 632.9,1002.8 636.9,1018.8 C640.9,1034.7 629.7,1044.3 627.3,1057.1 C624.9,1069.8 628.9,1083.4 622.5,1095.4 C616.2,1107.3 597.8,1125.7 589.0,1128.9 C580.2,1132.1 570.7,1129.7 569.9,1114.5 C569.1,1099.4 584.2,1060.3 584.2,1037.9 C584.2,1015.6 579.4,998.0 569.9,980.4 C560.3,962.9 527.6,939.7 526.8,932.6Z" fill="#111713"/><path d="M402.3,1162.4 C409.4,1152.0 433.4,1142.5 450.2,1133.7 C466.9,1124.9 488.5,1114.5 502.8,1109.7 C517.2,1104.9 530.0,1101.8 536.3,1104.9 C542.7,1108.1 545.9,1119.3 541.1,1128.9 C536.3,1138.5 514.8,1151.2 507.6,1162.4 C500.4,1173.6 504.4,1184.8 498.0,1195.9 C491.7,1207.1 481.3,1224.7 469.3,1229.5 C457.3,1234.2 436.6,1230.2 426.2,1224.7 C415.8,1219.1 411.0,1206.3 407.1,1195.9 C403.1,1185.6 395.1,1172.8 402.3,1162.4Z" fill="#111713"/><path d="M119.7,1229.5 C125.3,1218.3 147.7,1203.1 167.6,1195.9 C187.6,1188.7 220.3,1185.6 239.5,1186.4 C258.6,1187.2 280.2,1192.7 282.6,1200.7 C284.9,1208.7 269.0,1224.7 253.8,1234.2 C238.7,1243.8 211.5,1253.4 191.6,1258.2 C171.6,1263.0 146.1,1267.8 134.1,1263.0 C122.1,1258.2 114.2,1240.6 119.7,1229.5Z" fill="#111713"/><path d="M47.9,1143.3 C55.9,1132.1 79.8,1136.1 95.8,1128.9 C111.8,1121.7 129.3,1108.1 143.7,1100.2 C158.0,1092.2 178.8,1075.4 182.0,1081.0 C185.2,1086.6 174.8,1118.5 162.8,1133.7 C150.9,1148.8 129.3,1161.6 110.2,1172.0 C91.0,1182.4 58.3,1200.7 47.9,1195.9 C37.5,1191.1 39.9,1154.4 47.9,1143.3Z" fill="#111713"/><path d="M47.9,1373.1 C59.9,1361.1 95.8,1364.3 119.7,1363.5 C143.7,1362.7 167.6,1369.1 191.6,1368.3 C215.5,1367.5 239.5,1358.7 263.4,1358.7 C287.3,1358.7 315.3,1369.1 335.2,1368.3 C355.2,1367.5 370.3,1364.3 383.1,1354.0 C395.9,1343.6 399.9,1318.8 411.8,1306.1 C423.8,1293.3 439.8,1286.9 454.9,1277.3 C470.1,1267.8 482.9,1251.8 502.8,1248.6 C522.8,1245.4 554.7,1253.4 574.7,1258.2 C594.6,1263.0 605.0,1269.4 622.5,1277.3 C640.1,1285.3 668.0,1298.1 680.0,1306.1 C692.0,1314.0 700.0,1315.6 694.4,1325.2 C688.8,1334.8 662.4,1357.1 646.5,1363.5 C630.5,1369.9 618.6,1363.5 598.6,1363.5 C578.6,1363.5 546.7,1361.1 526.8,1363.5 C506.8,1365.9 486.9,1368.3 478.9,1377.9 C470.9,1387.5 486.9,1411.4 478.9,1421.0 C470.9,1430.6 447.0,1430.6 431.0,1435.4 C415.0,1440.1 402.3,1445.7 383.1,1449.7 C364.0,1453.7 348.0,1458.5 316.1,1459.3 C284.1,1460.1 228.3,1457.7 191.6,1454.5 C154.9,1451.3 119.7,1443.3 95.8,1440.1 C71.9,1437.0 55.9,1446.5 47.9,1435.4 C39.9,1424.2 35.9,1385.1 47.9,1373.1Z" fill="#111713"/><path d="M761.4,1133.7 C763.8,1124.9 776.6,1134.5 794.9,1138.5 C813.3,1142.5 858.8,1146.4 871.6,1157.6 C884.3,1168.8 879.5,1194.3 871.6,1205.5 C863.6,1216.7 838.8,1227.1 823.7,1224.7 C808.5,1222.3 790.9,1206.3 780.6,1191.1 C770.2,1176.0 759.0,1142.5 761.4,1133.7Z" fill="#111713"/><path d="M885.9,1205.5 C893.9,1195.9 933.8,1198.3 957.7,1195.9 C981.7,1193.5 1006.4,1190.3 1029.6,1191.1 C1052.7,1191.9 1084.6,1189.5 1096.6,1200.7 C1108.6,1211.9 1112.6,1247.0 1101.4,1258.2 C1090.2,1269.4 1049.5,1263.8 1029.6,1267.8 C1009.6,1271.7 995.3,1277.3 981.7,1282.1 C968.1,1286.9 960.1,1301.3 948.2,1296.5 C936.2,1291.7 920.2,1268.6 909.9,1253.4 C899.5,1238.2 877.9,1215.1 885.9,1205.5Z" fill="#111713"/><path d="M775.8,1277.3 C783.8,1263.8 812.5,1256.6 833.2,1263.0 C854.0,1269.4 899.5,1302.9 900.3,1315.6 C901.1,1328.4 857.2,1334.8 838.0,1339.6 C818.9,1344.4 795.7,1354.8 785.4,1344.4 C775.0,1334.0 767.8,1290.9 775.8,1277.3Z" fill="#111713"/><path d="M416.6,1052.3 C420.6,1045.9 441.4,1049.9 445.4,1057.1 C449.4,1064.2 444.6,1089.0 440.6,1095.4 C436.6,1101.8 425.4,1102.6 421.4,1095.4 C417.4,1088.2 412.6,1058.7 416.6,1052.3Z" fill="#111713"/><path d="M258.6,788.9 C263.0,787.7 283.0,791.3 287.3,793.7 C291.7,796.1 289.3,802.1 284.9,803.3 C280.6,804.5 265.4,803.3 261.0,800.9 C256.6,798.5 254.2,790.1 258.6,788.9Z" fill="#111713"/><path d="M1383.3,750.6 C1432.0,742.6 1631.0,742.6 1685.4,750.6 C1739.7,758.6 1709.4,778.6 1709.4,798.5 C1709.4,818.5 1696.6,854.5 1685.4,870.5 C1674.2,886.5 1646.2,882.5 1642.2,894.5 C1638.2,906.5 1646.2,932.8 1661.4,942.4 C1676.6,952.0 1709.4,953.6 1733.3,952.0 C1757.3,950.4 1769.3,937.6 1805.3,932.8 C1841.2,928.0 1879.8,925.6 1949.2,923.2 C2018.5,920.8 2176.2,910.4 2221.6,918.4 C2267.0,926.4 2251.0,962.4 2221.6,971.2 C2192.1,980.0 2090.5,968.0 2045.1,971.2 C1999.7,974.4 1989.1,985.6 1949.2,990.4 C1909.2,995.2 1836.5,992.0 1805.3,1000.0 C1774.1,1008.0 1765.3,1024.0 1762.1,1038.3 C1758.9,1052.7 1794.9,1078.3 1786.1,1086.3 C1777.3,1094.3 1730.1,1092.7 1709.4,1086.3 C1688.6,1079.9 1681.4,1057.5 1661.4,1047.9 C1641.4,1038.3 1613.4,1030.3 1589.5,1028.7 C1565.5,1027.1 1541.5,1029.5 1517.5,1038.3 C1493.6,1047.1 1477.6,1073.5 1445.6,1081.5 C1413.6,1089.5 1349.7,1079.1 1325.7,1086.3 C1301.7,1093.5 1321.7,1119.9 1301.7,1124.7 C1281.7,1129.5 1229.0,1125.5 1205.8,1115.1 C1182.6,1104.7 1162.6,1077.5 1162.6,1062.3 C1162.6,1047.1 1186.6,1031.1 1205.8,1024.0 C1225.0,1016.8 1249.8,1016.8 1277.7,1019.2 C1305.7,1021.6 1352.9,1043.1 1373.7,1038.3 C1394.4,1033.5 1392.8,1006.4 1402.4,990.4 C1412.0,974.4 1428.0,966.4 1431.2,942.4 C1434.4,918.4 1428.0,870.5 1421.6,846.5 C1415.2,822.5 1399.2,814.5 1392.8,798.5 C1386.4,782.6 1334.5,758.6 1383.3,750.6Z" fill="#111713"/><path d="M1709.4,750.6 C1790.7,734.6 2136.2,741.0 2221.6,750.6 C2306.9,760.2 2235.0,793.8 2221.6,808.1 C2208.1,822.5 2174.4,826.5 2141.0,836.9 C2107.6,847.3 2061.1,862.5 2021.1,870.5 C1981.1,878.5 1945.2,880.9 1901.2,884.9 C1857.2,888.9 1785.3,900.9 1757.3,894.5 C1729.3,888.1 1741.3,870.5 1733.3,846.5 C1725.4,822.5 1628.0,766.6 1709.4,750.6Z" fill="#111713"/><path d="M1133.9,750.6 C1149.9,720.2 1218.6,734.6 1229.8,750.6 C1241.0,766.6 1208.2,819.3 1201.0,846.5 C1193.8,873.7 1177.8,903.3 1186.6,913.6 C1195.4,924.0 1234.6,905.7 1253.8,908.9 C1272.9,912.0 1295.3,924.0 1301.7,932.8 C1308.1,941.6 1305.7,958.4 1292.1,961.6 C1278.5,964.8 1246.6,956.8 1220.2,952.0 C1193.8,947.2 1148.3,966.4 1133.9,932.8 C1119.5,899.3 1117.9,781.0 1133.9,750.6Z" fill="#111713"/><path d="M1412.0,1134.3 C1420.0,1127.1 1463.2,1132.7 1479.2,1139.0 C1495.2,1145.4 1504.7,1163.0 1507.9,1172.6 C1511.1,1182.2 1511.1,1195.0 1498.4,1196.6 C1485.6,1198.2 1445.6,1192.6 1431.2,1182.2 C1416.8,1171.8 1404.0,1141.4 1412.0,1134.3Z" fill="#111713"/><path d="M1575.1,1115.1 C1585.5,1102.3 1619.0,1086.3 1637.4,1086.3 C1655.8,1086.3 1675.8,1104.7 1685.4,1115.1 C1695.0,1125.5 1703.0,1140.6 1695.0,1148.6 C1687.0,1156.6 1652.6,1157.4 1637.4,1163.0 C1622.2,1168.6 1614.2,1182.2 1603.9,1182.2 C1593.5,1182.2 1579.9,1174.2 1575.1,1163.0 C1570.3,1151.8 1564.7,1127.9 1575.1,1115.1Z" fill="#111713"/><path d="M1229.8,1187.0 C1240.2,1183.8 1287.3,1196.6 1301.7,1191.8 C1316.1,1187.0 1308.1,1164.6 1316.1,1158.2 C1324.1,1151.8 1340.1,1149.4 1349.7,1153.4 C1359.3,1157.4 1371.3,1172.6 1373.7,1182.2 C1376.1,1191.8 1380.1,1203.8 1364.1,1211.0 C1348.1,1218.2 1298.5,1225.4 1277.7,1225.4 C1257.0,1225.4 1247.4,1217.4 1239.4,1211.0 C1231.4,1204.6 1219.4,1190.2 1229.8,1187.0Z" fill="#111713"/><path d="M1728.5,1220.6 C1732.5,1214.2 1764.5,1236.6 1781.3,1254.1 C1798.1,1271.7 1813.3,1306.1 1829.3,1326.1 C1845.2,1346.1 1853.2,1359.7 1877.2,1374.0 C1901.2,1388.4 1953.2,1400.4 1973.1,1412.4 C1993.1,1424.4 2009.1,1441.2 1997.1,1446.0 C1985.1,1450.8 1929.2,1446.8 1901.2,1441.2 C1873.2,1435.6 1853.2,1423.6 1829.3,1412.4 C1805.3,1401.2 1785.3,1388.4 1757.3,1374.0 C1729.3,1359.7 1681.4,1339.7 1661.4,1326.1 C1641.4,1312.5 1629.4,1296.5 1637.4,1292.5 C1645.4,1288.5 1689.4,1302.1 1709.4,1302.1 C1729.3,1302.1 1754.1,1306.1 1757.3,1292.5 C1760.5,1278.9 1724.6,1227.0 1728.5,1220.6Z" fill="#111713"/><path d="M1853.2,1254.1 C1862.8,1243.8 1881.2,1239.8 1901.2,1239.8 C1921.2,1239.8 1957.1,1239.8 1973.1,1254.1 C1989.1,1268.5 2001.1,1307.7 1997.1,1326.1 C1993.1,1344.5 1969.1,1360.5 1949.2,1364.5 C1929.2,1368.4 1894.8,1360.5 1877.2,1350.1 C1859.6,1339.7 1847.6,1318.1 1843.6,1302.1 C1839.7,1286.1 1843.6,1264.5 1853.2,1254.1Z" fill="#111713"/><path d="M2179.4,1134.3 C2186.4,1121.5 2214.5,1116.7 2221.6,1129.5 C2228.6,1142.2 2228.6,1198.2 2221.6,1211.0 C2214.5,1223.8 2186.4,1219.0 2179.4,1206.2 C2172.3,1193.4 2172.3,1147.0 2179.4,1134.3Z" fill="#111713"/><path d="M1268.2,1374.0 C1281.7,1359.5 1330.5,1375.6 1349.7,1383.6 C1368.9,1391.6 1371.3,1414.0 1383.3,1422.0 C1395.2,1430.0 1399.2,1428.4 1421.6,1431.6 C1444.0,1434.8 1497.6,1434.6 1517.5,1441.2 C1537.5,1447.7 1583.1,1466.0 1541.5,1470.9 C1499.9,1475.9 1313.7,1487.1 1268.2,1470.9 C1222.6,1454.8 1254.6,1388.6 1268.2,1374.0Z" fill="#111713"/><path d="M1325.7,1287.7 C1342.5,1278.1 1415.2,1252.5 1431.2,1258.9 C1447.2,1265.3 1432.8,1312.5 1421.6,1326.1 C1410.4,1339.7 1379.3,1342.1 1364.1,1340.5 C1348.9,1338.9 1336.9,1325.3 1330.5,1316.5 C1324.1,1307.7 1308.9,1297.3 1325.7,1287.7Z" fill="#111713"/><path d="M1987.5,1129.5 C1991.1,1127.1 2007.5,1131.1 2011.5,1134.3 C2015.5,1137.5 2015.1,1146.2 2011.5,1148.6 C2007.9,1151.0 1993.9,1151.8 1989.9,1148.6 C1985.9,1145.4 1983.9,1131.9 1987.5,1129.5Z" fill="#111713"/><path d="M1757.3,1441.2 C1773.3,1437.0 1837.3,1441.0 1853.2,1446.0 C1869.2,1450.9 1869.2,1466.8 1853.2,1470.9 C1837.3,1475.1 1773.3,1475.9 1757.3,1470.9 C1741.3,1466.0 1741.3,1445.3 1757.3,1441.2Z" fill="#111713"/><path d="M1637.4,860.9 C1648.6,850.5 1683.8,844.1 1699.8,846.5 C1715.8,848.9 1729.3,859.3 1733.3,875.3 C1737.3,891.3 1735.7,929.6 1723.8,942.4 C1711.8,955.2 1676.6,957.6 1661.4,952.0 C1646.2,946.4 1636.6,924.0 1632.6,908.9 C1628.6,893.7 1626.2,871.3 1637.4,860.9Z" fill="#40563a"/><path d="M1814.9,808.1 C1833.3,794.6 1898.8,792.2 1925.2,798.5 C1951.6,804.9 1977.1,831.3 1973.1,846.5 C1969.1,861.7 1927.6,884.1 1901.2,889.7 C1874.8,895.3 1829.3,893.7 1814.9,880.1 C1800.5,866.5 1796.5,821.7 1814.9,808.1Z" fill="#40563a"/><path d="M2045.1,798.5 C2053.1,786.6 2101.0,785.8 2117.0,793.8 C2133.0,801.7 2149.0,834.5 2141.0,846.5 C2133.0,858.5 2085.0,873.7 2069.1,865.7 C2053.1,857.7 2037.1,810.5 2045.1,798.5Z" fill="#40563a"/><path d="M1795.7,219.0 C1807.7,211.0 1851.6,209.4 1877.2,209.4 C1902.8,209.4 1941.2,209.4 1949.2,219.0 C1957.1,228.6 1941.2,256.5 1925.2,266.9 C1909.2,277.3 1873.2,282.9 1853.2,281.3 C1833.3,279.7 1814.9,267.7 1805.3,257.3 C1795.7,247.0 1783.7,227.0 1795.7,219.0Z" fill="#40563a"/><path d="M613.0,525.2 C621.7,519.6 660.1,516.4 670.4,520.4 C680.8,524.4 684.0,543.5 675.2,549.1 C666.4,554.7 628.1,557.9 617.8,553.9 C607.4,549.9 604.2,530.8 613.0,525.2Z" fill="#40563a"/><path d="M1412.0,1134.3 C1420.0,1127.1 1463.2,1132.7 1479.2,1139.0 C1495.2,1145.4 1504.7,1163.0 1507.9,1172.6 C1511.1,1182.2 1511.1,1195.0 1498.4,1196.6 C1485.6,1198.2 1445.6,1192.6 1431.2,1182.2 C1416.8,1171.8 1404.0,1141.4 1412.0,1134.3Z" fill="#1e302c"/><polyline points="1287,27 1297,46 1374,75 1383,94 1412,75 1422,61 1489,61 1491,75 1470,104 1498,252 1676,272 1844,339 1944,332 2055,358 2071,425 1930,471 1781,751" fill="none" stroke="#c8c040" stroke-width="2" stroke-linejoin="round" stroke-linecap="round" stroke-dasharray="5,3"/><polyline points="1772,751 1767,799 1719,875 1748,947 1949,921 2222,921" fill="none" stroke="#d8d040" stroke-width="2.5" stroke-linejoin="round" stroke-linecap="round"/><polyline points="752,889 814,851 862,813 920,770 950,690 1110,645 1150,650 1185,700 1250,740 1175,860 1220,960 1265,1050 1420,1050 1550,990 1610,920 1640,860 1613,866 1623,856" fill="none" stroke="#f2e233" stroke-width="5" stroke-linejoin="round" stroke-linecap="round"/><polyline points="965,386 972,391 1006,396 1058,396 1134,362 1153,358 1211,394 1278,380 1302,384 1350,372 1383,348 1422,327 1458,320" fill="none" stroke="#4ed3e0" stroke-width="5" stroke-linejoin="round" stroke-linecap="round"/><polyline points="1013,401 996,425 1020,449 1006,482 1015,506 996,516 958,506 905,513 900,554 905,626 939,631 934,698 919,751 900,770 862,798 857,813 814,837 805,861 757,875 752,889" fill="none" stroke="#4ed3e0" stroke-width="5" stroke-linejoin="round" stroke-linecap="round"/><polyline points="757,889 694,846 671,830 651,830 623,846 575,880" fill="none" stroke="#d42828" stroke-width="5" stroke-linejoin="round" stroke-linecap="round"/><polyline points="560,933 599,971 615,1052 599,1095 565,1124" fill="none" stroke="#d42828" stroke-width="5" stroke-linejoin="round" stroke-linecap="round"/><polyline points="489,1162 496,1210 474,1253 465,1325" fill="none" stroke="#d42828" stroke-width="5" stroke-linejoin="round" stroke-linecap="round"/><polyline points="417,1373 426,1392" fill="none" stroke="#d42828" stroke-width="6" stroke-linejoin="round" stroke-linecap="round"/><polyline points="757,885 742,894 728,889 685,837 675,789 680,765 673,760" fill="none" stroke="#d8f2f6" stroke-width="4.5" stroke-linejoin="round" stroke-linecap="round"/><polyline points="673,794 637,798 575,875 556,928 599,966 618,1052 594,1100 498,1158 493,1210 474,1253 469,1330 431,1359 417,1378 426,1392" fill="none" stroke="#d8f2f6" stroke-width="4.5" stroke-linejoin="round" stroke-linecap="round"/><polyline points="1369,82 1374,99 1393,104 1422,104 1441,118 1465,133 1479,147 1477,161 1479,195 1489,257 1455,320" fill="none" stroke="#7ee83a" stroke-width="6" stroke-linejoin="round" stroke-linecap="round"/><polyline points="1479,166 1498,181 1515,190 1513,166 1515,228 1503,252" fill="none" stroke="#7ee83a" stroke-width="6" stroke-linejoin="round" stroke-linecap="round"/><polyline points="1460,320 1570,350 1578,340 1700,340 1840,335 1940,350 2000,380 1995,405 1900,450 1830,490 1780,540 1770,610 1740,650 1700,690 1690,725 1650,740 1610,720 1580,730 1560,780 1530,790 1540,820 1600,855 1620,860" fill="none" stroke="#9a34e6" stroke-width="5" stroke-linejoin="round" stroke-linecap="round"/><polygon points="417,1398 408,1412 426,1412" fill="#9ef08a" stroke="#2a8a2a" stroke-width="2"/><text x="1620" y="333" font-size="26.5" fill="#e6eef0" font-weight="400" style="font-family:'Liberation Sans',sans-serif" filter="url(#sh)" stroke="#e6eef0" stroke-width="0.6">Hausons Island</text><text x="812" y="726" font-size="26.5" fill="#e6eef0" font-weight="400" style="font-family:'Liberation Sans',sans-serif" filter="url(#sh)" stroke="#e6eef0" stroke-width="0.6">New York Island</text><text x="835" y="767" font-size="26.5" fill="#e6eef0" font-weight="400" style="font-family:'Liberation Sans',sans-serif" filter="url(#sh)" stroke="#e6eef0" stroke-width="0.6">Gary Island</text><text x="1615" y="735" font-size="26.5" fill="#e6eef0" font-weight="400" style="font-family:'Liberation Sans',sans-serif" filter="url(#sh)" stroke="#e6eef0" stroke-width="0.6">Indian Grave Island</text><text x="1423" y="800" font-size="26.5" fill="#e6eef0" font-weight="400" style="font-family:'Liberation Sans',sans-serif" filter="url(#sh)" stroke="#e6eef0" stroke-width="0.6">Half Dog Island</text><text x="1530" y="834" font-size="26.5" fill="#e6eef0" font-weight="400" style="font-family:'Liberation Sans',sans-serif" filter="url(#sh)" stroke="#e6eef0" stroke-width="0.6">Washington Island</text><text x="1608" y="928" font-size="26.5" fill="#e6eef0" font-weight="400" style="font-family:'Liberation Sans',sans-serif" filter="url(#sh)" stroke="#e6eef0" stroke-width="0.6">Lincoln Island</text><text x="1383" y="978" font-size="26.5" fill="#e6eef0" font-weight="400" style="font-family:'Liberation Sans',sans-serif" filter="url(#sh)" stroke="#e6eef0" stroke-width="0.6">Canoe Island</text><text x="1545" y="985" font-size="26.5" fill="#e6eef0" font-weight="400" style="font-family:'Liberation Sans',sans-serif" filter="url(#sh)" stroke="#e6eef0" stroke-width="0.6">Norway Island</text><text x="1692" y="997" font-size="26.5" fill="#e6eef0" font-weight="400" style="font-family:'Liberation Sans',sans-serif" filter="url(#sh)" stroke="#e6eef0" stroke-width="0.6">Squirrel Island</text><text x="418" y="1347" font-size="26.5" fill="#e6eef0" font-weight="400" style="font-family:'Liberation Sans',sans-serif" filter="url(#sh)" stroke="#e6eef0" stroke-width="0.6">Mile Island</text><text x="527" y="1360" font-size="26.5" fill="#e6eef0" font-weight="400" style="font-family:'Liberation Sans',sans-serif" filter="url(#sh)" stroke="#e6eef0" stroke-width="0.6">Charlies Island</text><text x="1090" y="935" font-size="44" fill="#111" font-weight="400" style="font-family:'Liberation Sans',sans-serif">Text</text><text x="52" y="1383" font-size="40" fill="#f2f2f2" font-weight="400" style="font-family:'Liberation Sans',sans-serif" filter="url(#sh)">Google Earth</text><text x="50" y="1430" font-size="17" fill="#e0e0e0" font-weight="400" style="font-family:'Liberation Sans',sans-serif" filter="url(#sh)">©2017 Google</text><text x="50" y="1460" font-size="17" fill="#e0e0e0" font-weight="400" style="font-family:'Liberation Sans',sans-serif" filter="url(#sh)">Image © 2017 DigitalGlobe</text><polyline points="1775,1433 1775,1465 2215,1465 2215,1433" fill="none" stroke="#f0f0f0" stroke-width="3"/><rect x="1778" y="1435" width="434" height="28" fill="#000" opacity="0.25"/><text x="1968" y="1457" font-size="24" fill="#f0f0f0" font-weight="400" style="font-family:'Liberation Sans',sans-serif" filter="url(#sh)">3 mi</text><path d="M2175,1330 L2150,1375 L2162,1368 Z" fill="#fff"/><text x="2125" y="1412" font-size="44" font-style="italic" fill="#fff" style="font-family:'Liberation Serif',serif" filter="url(#sh)">N</text><rect x="57" y="37" width="440" height="114" fill="#ececec" opacity="0.95"/><text x="72" y="88" font-size="38.3" fill="#252525" font-weight="700" style="font-family:'Liberation Sans',sans-serif">Boundary Waters Trip</text><text x="72" y="130" font-size="23" fill="#4a4a4a" font-weight="400" style="font-family:'Liberation Sans',sans-serif">Six days in BWCA</text><rect x="58" y="160" width="237" height="338" fill="#ececec" opacity="0.95"/><text x="73" y="198" font-size="24.5" fill="#252525" font-weight="700" style="font-family:'Liberation Sans',sans-serif">Legend</text><circle cx="88" cy="226.0" r="4" fill="none" stroke="#8fc8d0" stroke-width="2.4"/><circle cx="82" cy="236.0" r="4" fill="none" stroke="#8fc8d0" stroke-width="2.4"/><circle cx="96" cy="236.0" r="4" fill="none" stroke="#8fc8d0" stroke-width="2.4"/><text x="122" y="242.0" font-size="22.5" fill="#333" font-weight="400" style="font-family:'Liberation Sans',sans-serif">Day 1</text><circle cx="88" cy="263.9" r="4" fill="none" stroke="#d8c84a" stroke-width="2.4"/><circle cx="82" cy="273.9" r="4" fill="none" stroke="#d8c84a" stroke-width="2.4"/><circle cx="96" cy="273.9" r="4" fill="none" stroke="#d8c84a" stroke-width="2.4"/><text x="122" y="279.9" font-size="22.5" fill="#333" font-weight="400" style="font-family:'Liberation Sans',sans-serif">Day 2</text><circle cx="88" cy="301.8" r="4" fill="none" stroke="#8a3ac8" stroke-width="2.4"/><circle cx="82" cy="311.8" r="4" fill="none" stroke="#8a3ac8" stroke-width="2.4"/><circle cx="96" cy="311.8" r="4" fill="none" stroke="#8a3ac8" stroke-width="2.4"/><text x="122" y="317.8" font-size="22.5" fill="#333" font-weight="400" style="font-family:'Liberation Sans',sans-serif">Day 3</text><circle cx="88" cy="339.7" r="4" fill="none" stroke="#7ac050" stroke-width="2.4"/><circle cx="82" cy="349.7" r="4" fill="none" stroke="#7ac050" stroke-width="2.4"/><circle cx="96" cy="349.7" r="4" fill="none" stroke="#7ac050" stroke-width="2.4"/><text x="122" y="355.7" font-size="22.5" fill="#333" font-weight="400" style="font-family:'Liberation Sans',sans-serif">Day 4</text><circle cx="88" cy="377.6" r="4" fill="none" stroke="#4ab8c8" stroke-width="2.4"/><circle cx="82" cy="387.6" r="4" fill="none" stroke="#4ab8c8" stroke-width="2.4"/><circle cx="96" cy="387.6" r="4" fill="none" stroke="#4ab8c8" stroke-width="2.4"/><text x="122" y="393.6" font-size="22.5" fill="#333" font-weight="400" style="font-family:'Liberation Sans',sans-serif">Day 5</text><circle cx="88" cy="415.5" r="4" fill="none" stroke="#c83040" stroke-width="2.4"/><circle cx="82" cy="425.5" r="4" fill="none" stroke="#c83040" stroke-width="2.4"/><circle cx="96" cy="425.5" r="4" fill="none" stroke="#c83040" stroke-width="2.4"/><text x="122" y="431.5" font-size="22.5" fill="#333" font-weight="400" style="font-family:'Liberation Sans',sans-serif">Day 6</text><polygon points="91,448 80,470 102,470" fill="#a8f0a0" stroke="#3a9a3a" stroke-width="2.5"/><text x="122" y="469" font-size="22.5" fill="#333" font-weight="400" style="font-family:'Liberation Sans',sans-serif">Entry Point 24</text></svg>
<div class="r" style="left:1691px;top:438px;width:1795px;height:1984px;overflow:hidden">
<div style="position:absolute;left:219px;top:1162.3px;width:1361px;font-family:'Liberation Sans',sans-serif;font-size:31.6px;line-height:31.6px;color:#000;text-align:justify;text-align-last:justify;white-space:nowrap;letter-spacing:0">Curabitur bibendum ante urna, sed blandit libero egestas id. Pellentesque rhoncus elit in lacus</div>
<div style="position:absolute;left:219px;top:1198.5px;width:1361px;font-family:'Liberation Sans',sans-serif;font-size:31.6px;line-height:31.6px;color:#000;text-align:justify;text-align-last:justify;white-space:nowrap;letter-spacing:0">ultrices fringilla. Nam ac metus eu turpis mattis rutrum. Mauris mattis sem ex, facilisis molestie</div>
<div style="position:absolute;left:219px;top:1234.8px;width:1361px;font-family:'Liberation Sans',sans-serif;font-size:31.6px;line-height:31.6px;color:#000;text-align:justify;text-align-last:justify;white-space:nowrap;letter-spacing:0">sapien luctus non. Vestibulum tincidunt urna at odio suscipit, vel congue felis cursus. Etiam tellus</div>
<div style="position:absolute;left:219px;top:1271.0px;width:1361px;font-family:'Liberation Sans',sans-serif;font-size:31.6px;line-height:31.6px;color:#000;text-align:left;text-align-last:left;white-space:nowrap;letter-spacing:0">magna, egestas ac suscipit in, laoreet quis felis. Proin non orci id dui tincidunt egestas.</div>
<div style="position:absolute;left:219px;top:1342.0px;width:1361px;font-family:'Liberation Sans',sans-serif;font-size:31.6px;line-height:31.6px;color:#000;text-align:justify;text-align-last:justify;white-space:nowrap;letter-spacing:0">Vestibulum eleifend, ligula a scelerisque vehicula, risus justo ultricies ligula, et interdum lorem ex</div>
<div style="position:absolute;left:219px;top:1378.2px;width:1361px;font-family:'Liberation Sans',sans-serif;font-size:31.6px;line-height:31.6px;color:#000;text-align:justify;text-align-last:justify;white-space:nowrap;letter-spacing:-0.075px">eget ex. Duis dignissim lacus vitae velit laoreet, vitae placerat velit aliquet. Etiam eget mollis nulla,</div>
<div style="position:absolute;left:219px;top:1414.5px;width:1361px;font-family:'Liberation Sans',sans-serif;font-size:31.6px;line-height:31.6px;color:#000;text-align:justify;text-align-last:justify;white-space:nowrap;letter-spacing:0">ac vehicula mi. Etiam non sollicitudin velit, imperdiet commodo mi. Fusce quis tellus tellus. Donec</div>
<div style="position:absolute;left:219px;top:1450.7px;width:1361px;font-family:'Liberation Sans',sans-serif;font-size:31.6px;line-height:31.6px;color:#000;text-align:justify;text-align-last:justify;white-space:nowrap;letter-spacing:0">dictum euismod risus non tempus. Duis quis pellentesque nunc. Praesent elementum</div>
<div style="position:absolute;left:219px;top:1487.0px;width:1361px;font-family:'Liberation Sans',sans-serif;font-size:31.6px;line-height:31.6px;color:#000;text-align:left;text-align-last:left;white-space:nowrap;letter-spacing:0">condimentum mollis.</div>
<div style="position:absolute;left:219px;top:1557.9px;width:1361px;font-family:'Liberation Sans',sans-serif;font-size:31.6px;line-height:31.6px;color:#000;text-align:justify;text-align-last:justify;white-space:nowrap;letter-spacing:0">Phasellus dapibus quam a hendrerit placerat. Sed ultrices blandit nulla sed sodales. Nunc quis</div>
<div style="position:absolute;left:219px;top:1594.1px;width:1361px;font-family:'Liberation Sans',sans-serif;font-size:31.6px;line-height:31.6px;color:#000;text-align:justify;text-align-last:justify;white-space:nowrap;letter-spacing:0">volutpat eros. Etiam bibendum eu tellus consequat blandit. Curabitur lacinia cursus diam sed</div>
<div style="position:absolute;left:219px;top:1630.4px;width:1361px;font-family:'Liberation Sans',sans-serif;font-size:31.6px;line-height:31.6px;color:#000;text-align:justify;text-align-last:justify;white-space:nowrap;letter-spacing:0">pharetra. Proin molestie tristique mauris ut aliquam. Donec purus odio, molestie id suscipit sit</div>
<div style="position:absolute;left:219px;top:1666.6px;width:1361px;font-family:'Liberation Sans',sans-serif;font-size:31.6px;line-height:31.6px;color:#000;text-align:justify;text-align-last:justify;white-space:nowrap;letter-spacing:0">amet, porttitor in erat. Vestibulum ut tellus vel mi lobortis porta nec vel tellus. Quisque pretium</div>
<div style="position:absolute;left:219px;top:1702.9px;width:1361px;font-family:'Liberation Sans',sans-serif;font-size:31.6px;line-height:31.6px;color:#000;text-align:justify;text-align-last:justify;white-space:nowrap;letter-spacing:0">blandit dignissim. Proin eu metus convallis sapien efficitur mollis. Nunc luctus ex in nunc ornare,</div>
<div style="position:absolute;left:219px;top:1739.1px;width:1361px;font-family:'Liberation Sans',sans-serif;font-size:31.6px;line-height:31.6px;color:#000;text-align:justify;text-align-last:justify;white-space:nowrap;letter-spacing:0">nec blandit orci faucibus. Aenean bibendum mi vel neque euismod hendrerit. Vestibulum ac</div>
<div style="position:absolute;left:219px;top:1775.4px;width:1361px;font-family:'Liberation Sans',sans-serif;font-size:31.6px;line-height:31.6px;color:#000;text-align:justify;text-align-last:justify;white-space:nowrap;letter-spacing:0">pharetra magna. Ut rutrum, orci at blandit faucibus, justo mauris iaculis mauris, ut tempor lectus</div>
<div style="position:absolute;left:219px;top:1811.6px;width:1361px;font-family:'Liberation Sans',sans-serif;font-size:31.6px;line-height:31.6px;color:#000;text-align:left;text-align-last:left;white-space:nowrap;letter-spacing:0">risus at ligula.</div>
<div style="position:absolute;left:219px;top:1882.9px;width:1361px;font-family:'Liberation Sans',sans-serif;font-size:31.6px;line-height:31.6px;color:#000;text-align:justify;text-align-last:justify;white-space:nowrap;letter-spacing:0">Duis non tincidunt purus. Nam quis sapien risus. Donec mattis convallis tempor. Fusce aliquam</div>
<div style="position:absolute;left:219px;top:1919.1px;width:1361px;font-family:'Liberation Sans',sans-serif;font-size:31.6px;line-height:31.6px;color:#000;text-align:justify;text-align-last:justify;white-space:nowrap;letter-spacing:0">aliquet eros, nec rutrum lectus pretium at. Praesent blandit justo a mi dignissim placerat. Ut</div>
<div style="position:absolute;left:219px;top:1955.4px;width:1361px;font-family:'Liberation Sans',sans-serif;font-size:31.6px;line-height:31.6px;color:#000;text-align:left;text-align-last:left;white-space:nowrap;letter-spacing:0">ullamcorper elit eget diam maximus iaculis. In bibendum in massa eget facilisis. In iaculis lectus</div>
</div>
</div></body></html>
